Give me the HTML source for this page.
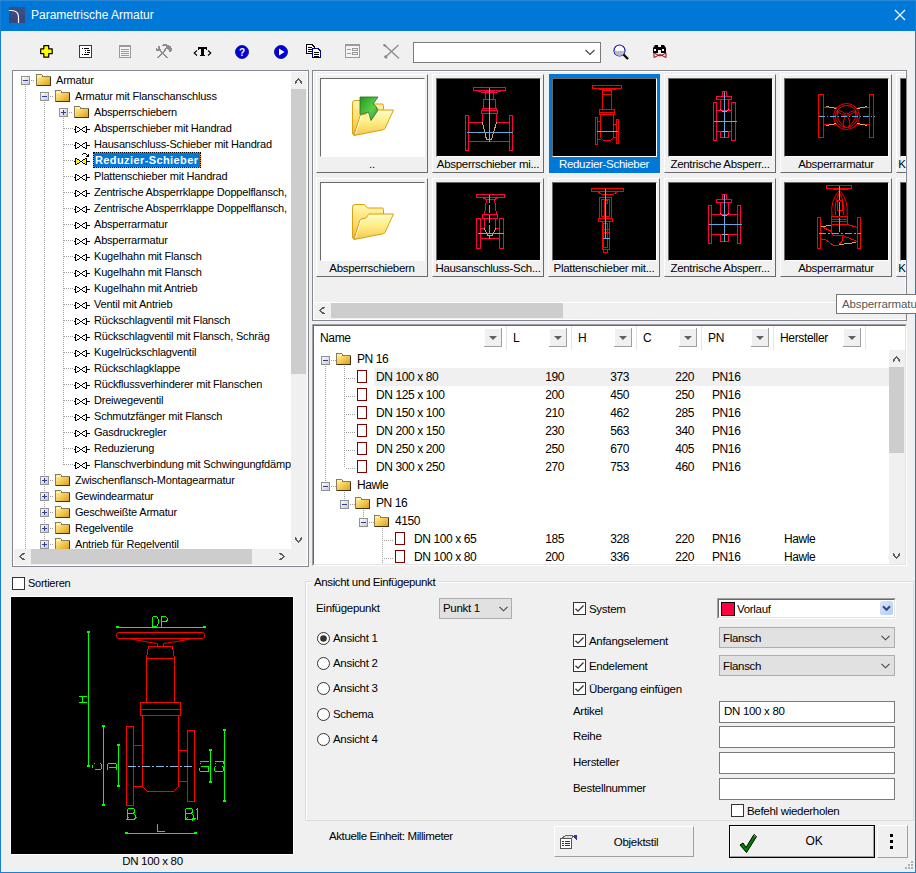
<!DOCTYPE html>
<html><head><meta charset="utf-8"><style>
html,body{margin:0;padding:0;}
body{width:916px;height:873px;position:relative;overflow:hidden;background:#F0F0F0;font-family:"Liberation Sans",sans-serif;}
.t{position:absolute;white-space:nowrap;}
svg{shape-rendering:crispEdges;}
</style></head><body>
<div style="position:absolute;left:0px;top:0px;width:916px;height:873px;box-sizing:border-box;border:1px solid #1A80D6;"></div>
<div style="position:absolute;left:1px;top:1px;width:914px;height:30px;background:#0078D7;"></div>
<div style="position:absolute;left:0px;top:0px;width:916px;height:1px;background:#2A88D8;"></div>
<svg style="position:absolute;left:9px;top:7px;" width="16" height="16" viewBox="0 0 16 16"><rect x="0" y="0" width="16" height="16" fill="#36497A"/><rect x="0" y="0" width="16" height="8" fill="#3E5287" opacity="0.6"/><path d="M0 3.5 H3 Q9.5 4 9.5 10 V16" stroke="#fff" stroke-width="1.2" fill="none" style="shape-rendering:geometricPrecision"/></svg>
<div class="t" style="left:31px;top:7px;height:16px;line-height:16px;font-size:12px;color:#fff;">Parametrische Armatur</div>
<svg style="position:absolute;left:894px;top:9px;" width="12" height="12" viewBox="0 0 12 12"><path d="M1 1 L11 11 M11 1 L1 11" stroke="#fff" stroke-width="1.2" style="shape-rendering:geometricPrecision"/></svg>
<svg style="position:absolute;left:40px;top:45px;" width="13" height="13" viewBox="0 0 13 13"><path d="M3.8 0.7 H8.7 V3.8 H12.2 V8.7 H8.7 V12.2 H3.8 V8.7 H0.7 V3.8 H3.8 Z" fill="#FFFF00" stroke="#000" stroke-width="1.2" stroke-linejoin="round" style="shape-rendering:geometricPrecision"/></svg>
<svg style="position:absolute;left:79px;top:45px;" width="14" height="14" viewBox="0 0 14 14"><rect x="0.5" y="0.5" width="12" height="12" fill="#fff" stroke="#3C3C3C"/><rect x="3" y="3" width="1" height="1" fill="#000"/><rect x="5" y="3" width="5" height="1" fill="#000"/><rect x="6" y="5" width="1" height="1" fill="#000"/><rect x="8" y="5" width="3" height="1" fill="#000"/><rect x="6" y="7" width="1" height="1" fill="#000"/><rect x="8" y="7" width="3" height="1" fill="#000"/><rect x="3" y="9" width="1" height="1" fill="#000"/><rect x="5" y="9" width="5" height="1" fill="#000"/></svg>
<svg style="position:absolute;left:119px;top:45px;" width="13" height="14" viewBox="0 0 13 14"><rect x="0.5" y="0.5" width="11" height="12" fill="#F4F4F4" stroke="#9A9A9A"/><rect x="0" y="0" width="12" height="2" fill="#9A9A9A"/><rect x="2" y="4" width="8" height="1" fill="#9A9A9A"/><rect x="2" y="6" width="8" height="1" fill="#9A9A9A"/><rect x="2" y="8" width="8" height="1" fill="#9A9A9A"/><rect x="2" y="10" width="8" height="1" fill="#9A9A9A"/></svg>
<svg style="position:absolute;left:155px;top:43px;" width="17" height="15" viewBox="0 0 17 15"><rect x="8" y="1" width="4" height="1" fill="#8E8E8E"/><rect x="7" y="2" width="7" height="1" fill="#8E8E8E"/><rect x="3" y="3" width="2" height="1" fill="#8E8E8E"/><rect x="11" y="3" width="5" height="1" fill="#8E8E8E"/><rect x="3" y="4" width="2" height="1" fill="#8E8E8E"/><rect x="11" y="4" width="5" height="1" fill="#8E8E8E"/><rect x="1" y="5" width="1" height="1" fill="#8E8E8E"/><rect x="3" y="5" width="2" height="1" fill="#8E8E8E"/><rect x="10" y="5" width="7" height="1" fill="#8E8E8E"/><rect x="1" y="6" width="5" height="1" fill="#8E8E8E"/><rect x="9" y="6" width="2" height="1" fill="#8E8E8E"/><rect x="13" y="6" width="4" height="1" fill="#8E8E8E"/><rect x="1" y="7" width="5" height="1" fill="#8E8E8E"/><rect x="9" y="7" width="2" height="1" fill="#8E8E8E"/><rect x="14" y="7" width="3" height="1" fill="#8E8E8E"/><rect x="5" y="8" width="2" height="1" fill="#8E8E8E"/><rect x="8" y="8" width="2" height="1" fill="#8E8E8E"/><rect x="14" y="8" width="2" height="1" fill="#8E8E8E"/><rect x="6" y="9" width="3" height="1" fill="#8E8E8E"/><rect x="6" y="10" width="3" height="1" fill="#8E8E8E"/><rect x="5" y="11" width="2" height="1" fill="#8E8E8E"/><rect x="8" y="11" width="2" height="1" fill="#8E8E8E"/><rect x="4" y="12" width="2" height="1" fill="#8E8E8E"/><rect x="9" y="12" width="2" height="1" fill="#8E8E8E"/><rect x="3" y="13" width="2" height="1" fill="#8E8E8E"/><rect x="10" y="13" width="2" height="1" fill="#8E8E8E"/><rect x="2" y="14" width="2" height="1" fill="#8E8E8E"/><rect x="11" y="14" width="2" height="1" fill="#8E8E8E"/></svg>
<svg style="position:absolute;left:192px;top:45px;" width="20" height="13" viewBox="0 0 20 13"><g fill="#000"><rect x="6" y="2" width="9" height="2"/><rect x="6" y="2" width="1" height="3"/><rect x="14" y="2" width="1" height="3"/><rect x="9" y="2" width="3" height="9"/><rect x="8" y="10" width="5" height="1"/></g><path d="M5 5.5 L2.2 8 L5 10.5 M16 5.5 L18.8 8 L16 10.5" stroke="#000" stroke-width="1.1" fill="none" style="shape-rendering:geometricPrecision"/></svg>
<svg style="position:absolute;left:235px;top:45px;" width="14" height="14" viewBox="0 0 14 14"><circle cx="7" cy="7" r="6.5" fill="#0000E0" stroke="#000080" stroke-width="0.8" style="shape-rendering:geometricPrecision"/><text x="7" y="11" text-anchor="middle" font-family="Liberation Sans" font-weight="bold" font-size="10" fill="#fff">?</text></svg>
<svg style="position:absolute;left:274px;top:45px;" width="14" height="14" viewBox="0 0 14 14"><circle cx="7" cy="7" r="6.5" fill="#0000E0" stroke="#000080" stroke-width="0.8" style="shape-rendering:geometricPrecision"/><path d="M5 3.5 L10.5 7 L5 10.5 Z" fill="#fff" style="shape-rendering:geometricPrecision"/></svg>
<svg style="position:absolute;left:306px;top:44px;" width="16" height="14" viewBox="0 0 16 14"><path d="M0.5 0.5 H6 L8 2.5 V9.5 H0.5 Z" fill="#fff" stroke="#000"/><rect x="2" y="3" width="4" height="1" fill="#000"/><rect x="2" y="5" width="4" height="1" fill="#000"/><rect x="2" y="7" width="4" height="1" fill="#000"/><path d="M6.5 4.5 H12 L14.5 7 V13.5 H6.5 Z" fill="#fff" stroke="#000080"/><rect x="8" y="8" width="5" height="1" fill="#000"/><rect x="8" y="10" width="5" height="1" fill="#000"/><rect x="8" y="12" width="5" height="1" fill="#000"/></svg>
<svg style="position:absolute;left:345px;top:44px;" width="15" height="14" viewBox="0 0 15 14"><rect x="0.5" y="0.5" width="14" height="13" fill="#F4F4F4" stroke="#9A9A9A"/><rect x="0" y="0" width="15" height="2" fill="#9A9A9A"/><rect x="2" y="5" width="4" height="1" fill="#9A9A9A"/><rect x="2" y="9" width="4" height="1" fill="#9A9A9A"/><rect x="7.5" y="4.5" width="5" height="2" fill="none" stroke="#9A9A9A"/><rect x="7.5" y="8.5" width="5" height="2" fill="none" stroke="#9A9A9A"/></svg>
<svg style="position:absolute;left:383px;top:44px;" width="17" height="15" viewBox="0 0 17 15"><g style="shape-rendering:geometricPrecision"><path d="M1 0.5 L16 14.5" stroke="#8A8A8A" stroke-width="1.3"/><path d="M15.5 1 L2.5 13" stroke="#8A8A8A" stroke-width="1.3"/><path d="M1.5 12 L4 14" stroke="#8A8A8A" stroke-width="2.5"/><path d="M0.5 0.5 L3 2.5" stroke="#8A8A8A" stroke-width="2"/></g></svg>
<div style="position:absolute;left:413px;top:42px;width:188px;height:21px;box-sizing:border-box;background:#fff;border:1px solid #7A7A7A;"></div>
<svg style="position:absolute;left:585px;top:49px;" width="10" height="7" viewBox="0 0 10 7"><path d="M0.5 1 L5 5.5 L9.5 1" stroke="#444" stroke-width="1.1" fill="none" style="shape-rendering:geometricPrecision"/></svg>
<svg style="position:absolute;left:613px;top:44px;" width="17" height="16" viewBox="0 0 17 16"><g style="shape-rendering:geometricPrecision"><circle cx="6.5" cy="6.5" r="5.5" fill="#fff" stroke="#1010A0" stroke-width="1.2"/><path d="M1.5 7 H11.5 A5 5 0 0 1 1.5 7 Z" fill="#B8B8D0"/><path d="M10.5 10.5 L15 15" stroke="#000" stroke-width="2.2"/></g></svg>
<svg style="position:absolute;left:652px;top:44px;" width="17" height="15" viewBox="0 0 17 15"><g style="shape-rendering:geometricPrecision"><path d="M2 13.5 V9 L8 12 L14 9 V13.5 L8 10.5 Z" fill="none" stroke="#A00000" stroke-width="1"/><path d="M1 9 V4 L3 1 H6 V9 Z" fill="#000"/><path d="M9 9 V1 H12 L14 4 V9 Z" fill="#000"/><rect x="6" y="3" width="3" height="3" fill="#000"/><rect x="2" y="5" width="2" height="2" fill="#fff"/><rect x="10" y="5" width="2" height="2" fill="#fff"/></g></svg>
<svg width="0" height="0" style="position:absolute"><defs><linearGradient id="fg" x1="0" y1="0" x2="1" y2="1"><stop offset="0" stop-color="#FFF6B0"/><stop offset="0.5" stop-color="#F5CC55"/><stop offset="1" stop-color="#DC9A18"/></linearGradient></defs></svg>
<div style="position:absolute;left:12px;top:70px;width:297px;height:497px;box-sizing:border-box;border:1px solid #828790;background:#fff;"></div>
<div style="position:absolute;left:14px;top:72px;width:277px;height:477px;overflow:hidden;">
<svg style="position:absolute;left:0;top:0" width="277" height="477"><g fill="#A0A0A0"><rect x="11" y="14" width="1" height="1"/><rect x="11" y="16" width="1" height="1"/><rect x="11" y="18" width="1" height="1"/><rect x="11" y="20" width="1" height="1"/><rect x="11" y="22" width="1" height="1"/><rect x="11" y="24" width="1" height="1"/><rect x="11" y="26" width="1" height="1"/><rect x="11" y="28" width="1" height="1"/><rect x="11" y="30" width="1" height="1"/><rect x="11" y="32" width="1" height="1"/><rect x="11" y="34" width="1" height="1"/><rect x="11" y="36" width="1" height="1"/><rect x="11" y="38" width="1" height="1"/><rect x="11" y="40" width="1" height="1"/><rect x="11" y="42" width="1" height="1"/><rect x="11" y="44" width="1" height="1"/><rect x="11" y="46" width="1" height="1"/><rect x="11" y="48" width="1" height="1"/><rect x="11" y="50" width="1" height="1"/><rect x="11" y="52" width="1" height="1"/><rect x="11" y="54" width="1" height="1"/><rect x="11" y="56" width="1" height="1"/><rect x="11" y="58" width="1" height="1"/><rect x="11" y="60" width="1" height="1"/><rect x="11" y="62" width="1" height="1"/><rect x="11" y="64" width="1" height="1"/><rect x="11" y="66" width="1" height="1"/><rect x="11" y="68" width="1" height="1"/><rect x="11" y="70" width="1" height="1"/><rect x="11" y="72" width="1" height="1"/><rect x="11" y="74" width="1" height="1"/><rect x="11" y="76" width="1" height="1"/><rect x="11" y="78" width="1" height="1"/><rect x="11" y="80" width="1" height="1"/><rect x="11" y="82" width="1" height="1"/><rect x="11" y="84" width="1" height="1"/><rect x="11" y="86" width="1" height="1"/><rect x="11" y="88" width="1" height="1"/><rect x="11" y="90" width="1" height="1"/><rect x="11" y="92" width="1" height="1"/><rect x="11" y="94" width="1" height="1"/><rect x="11" y="96" width="1" height="1"/><rect x="11" y="98" width="1" height="1"/><rect x="11" y="100" width="1" height="1"/><rect x="11" y="102" width="1" height="1"/><rect x="11" y="104" width="1" height="1"/><rect x="11" y="106" width="1" height="1"/><rect x="11" y="108" width="1" height="1"/><rect x="11" y="110" width="1" height="1"/><rect x="11" y="112" width="1" height="1"/><rect x="11" y="114" width="1" height="1"/><rect x="11" y="116" width="1" height="1"/><rect x="11" y="118" width="1" height="1"/><rect x="11" y="120" width="1" height="1"/><rect x="11" y="122" width="1" height="1"/><rect x="11" y="124" width="1" height="1"/><rect x="11" y="126" width="1" height="1"/><rect x="11" y="128" width="1" height="1"/><rect x="11" y="130" width="1" height="1"/><rect x="11" y="132" width="1" height="1"/><rect x="11" y="134" width="1" height="1"/><rect x="11" y="136" width="1" height="1"/><rect x="11" y="138" width="1" height="1"/><rect x="11" y="140" width="1" height="1"/><rect x="11" y="142" width="1" height="1"/><rect x="11" y="144" width="1" height="1"/><rect x="11" y="146" width="1" height="1"/><rect x="11" y="148" width="1" height="1"/><rect x="11" y="150" width="1" height="1"/><rect x="11" y="152" width="1" height="1"/><rect x="11" y="154" width="1" height="1"/><rect x="11" y="156" width="1" height="1"/><rect x="11" y="158" width="1" height="1"/><rect x="11" y="160" width="1" height="1"/><rect x="11" y="162" width="1" height="1"/><rect x="11" y="164" width="1" height="1"/><rect x="11" y="166" width="1" height="1"/><rect x="11" y="168" width="1" height="1"/><rect x="11" y="170" width="1" height="1"/><rect x="11" y="172" width="1" height="1"/><rect x="11" y="174" width="1" height="1"/><rect x="11" y="176" width="1" height="1"/><rect x="11" y="178" width="1" height="1"/><rect x="11" y="180" width="1" height="1"/><rect x="11" y="182" width="1" height="1"/><rect x="11" y="184" width="1" height="1"/><rect x="11" y="186" width="1" height="1"/><rect x="11" y="188" width="1" height="1"/><rect x="11" y="190" width="1" height="1"/><rect x="11" y="192" width="1" height="1"/><rect x="11" y="194" width="1" height="1"/><rect x="11" y="196" width="1" height="1"/><rect x="11" y="198" width="1" height="1"/><rect x="11" y="200" width="1" height="1"/><rect x="11" y="202" width="1" height="1"/><rect x="11" y="204" width="1" height="1"/><rect x="11" y="206" width="1" height="1"/><rect x="11" y="208" width="1" height="1"/><rect x="11" y="210" width="1" height="1"/><rect x="11" y="212" width="1" height="1"/><rect x="11" y="214" width="1" height="1"/><rect x="11" y="216" width="1" height="1"/><rect x="11" y="218" width="1" height="1"/><rect x="11" y="220" width="1" height="1"/><rect x="11" y="222" width="1" height="1"/><rect x="11" y="224" width="1" height="1"/><rect x="11" y="226" width="1" height="1"/><rect x="11" y="228" width="1" height="1"/><rect x="11" y="230" width="1" height="1"/><rect x="11" y="232" width="1" height="1"/><rect x="11" y="234" width="1" height="1"/><rect x="11" y="236" width="1" height="1"/><rect x="11" y="238" width="1" height="1"/><rect x="11" y="240" width="1" height="1"/><rect x="11" y="242" width="1" height="1"/><rect x="11" y="244" width="1" height="1"/><rect x="11" y="246" width="1" height="1"/><rect x="11" y="248" width="1" height="1"/><rect x="11" y="250" width="1" height="1"/><rect x="11" y="252" width="1" height="1"/><rect x="11" y="254" width="1" height="1"/><rect x="11" y="256" width="1" height="1"/><rect x="11" y="258" width="1" height="1"/><rect x="11" y="260" width="1" height="1"/><rect x="11" y="262" width="1" height="1"/><rect x="11" y="264" width="1" height="1"/><rect x="11" y="266" width="1" height="1"/><rect x="11" y="268" width="1" height="1"/><rect x="11" y="270" width="1" height="1"/><rect x="11" y="272" width="1" height="1"/><rect x="11" y="274" width="1" height="1"/><rect x="11" y="276" width="1" height="1"/><rect x="11" y="278" width="1" height="1"/><rect x="11" y="280" width="1" height="1"/><rect x="11" y="282" width="1" height="1"/><rect x="11" y="284" width="1" height="1"/><rect x="11" y="286" width="1" height="1"/><rect x="11" y="288" width="1" height="1"/><rect x="11" y="290" width="1" height="1"/><rect x="11" y="292" width="1" height="1"/><rect x="11" y="294" width="1" height="1"/><rect x="11" y="296" width="1" height="1"/><rect x="11" y="298" width="1" height="1"/><rect x="11" y="300" width="1" height="1"/><rect x="11" y="302" width="1" height="1"/><rect x="11" y="304" width="1" height="1"/><rect x="11" y="306" width="1" height="1"/><rect x="11" y="308" width="1" height="1"/><rect x="11" y="310" width="1" height="1"/><rect x="11" y="312" width="1" height="1"/><rect x="11" y="314" width="1" height="1"/><rect x="11" y="316" width="1" height="1"/><rect x="11" y="318" width="1" height="1"/><rect x="11" y="320" width="1" height="1"/><rect x="11" y="322" width="1" height="1"/><rect x="11" y="324" width="1" height="1"/><rect x="11" y="326" width="1" height="1"/><rect x="11" y="328" width="1" height="1"/><rect x="11" y="330" width="1" height="1"/><rect x="11" y="332" width="1" height="1"/><rect x="11" y="334" width="1" height="1"/><rect x="11" y="336" width="1" height="1"/><rect x="11" y="338" width="1" height="1"/><rect x="11" y="340" width="1" height="1"/><rect x="11" y="342" width="1" height="1"/><rect x="11" y="344" width="1" height="1"/><rect x="11" y="346" width="1" height="1"/><rect x="11" y="348" width="1" height="1"/><rect x="11" y="350" width="1" height="1"/><rect x="11" y="352" width="1" height="1"/><rect x="11" y="354" width="1" height="1"/><rect x="11" y="356" width="1" height="1"/><rect x="11" y="358" width="1" height="1"/><rect x="11" y="360" width="1" height="1"/><rect x="11" y="362" width="1" height="1"/><rect x="11" y="364" width="1" height="1"/><rect x="11" y="366" width="1" height="1"/><rect x="11" y="368" width="1" height="1"/><rect x="11" y="370" width="1" height="1"/><rect x="11" y="372" width="1" height="1"/><rect x="11" y="374" width="1" height="1"/><rect x="11" y="376" width="1" height="1"/><rect x="11" y="378" width="1" height="1"/><rect x="11" y="380" width="1" height="1"/><rect x="11" y="382" width="1" height="1"/><rect x="11" y="384" width="1" height="1"/><rect x="11" y="386" width="1" height="1"/><rect x="11" y="388" width="1" height="1"/><rect x="11" y="390" width="1" height="1"/><rect x="11" y="392" width="1" height="1"/><rect x="11" y="394" width="1" height="1"/><rect x="11" y="396" width="1" height="1"/><rect x="11" y="398" width="1" height="1"/><rect x="11" y="400" width="1" height="1"/><rect x="11" y="402" width="1" height="1"/><rect x="11" y="404" width="1" height="1"/><rect x="11" y="406" width="1" height="1"/><rect x="11" y="408" width="1" height="1"/><rect x="11" y="410" width="1" height="1"/><rect x="11" y="412" width="1" height="1"/><rect x="11" y="414" width="1" height="1"/><rect x="11" y="416" width="1" height="1"/><rect x="11" y="418" width="1" height="1"/><rect x="11" y="420" width="1" height="1"/><rect x="11" y="422" width="1" height="1"/><rect x="11" y="424" width="1" height="1"/><rect x="11" y="426" width="1" height="1"/><rect x="11" y="428" width="1" height="1"/><rect x="11" y="430" width="1" height="1"/><rect x="11" y="432" width="1" height="1"/><rect x="11" y="434" width="1" height="1"/><rect x="11" y="436" width="1" height="1"/><rect x="11" y="438" width="1" height="1"/><rect x="11" y="440" width="1" height="1"/><rect x="11" y="442" width="1" height="1"/><rect x="11" y="444" width="1" height="1"/><rect x="11" y="446" width="1" height="1"/><rect x="11" y="448" width="1" height="1"/><rect x="11" y="450" width="1" height="1"/><rect x="11" y="452" width="1" height="1"/><rect x="11" y="454" width="1" height="1"/><rect x="11" y="456" width="1" height="1"/><rect x="11" y="458" width="1" height="1"/><rect x="11" y="460" width="1" height="1"/><rect x="11" y="462" width="1" height="1"/><rect x="11" y="464" width="1" height="1"/><rect x="11" y="466" width="1" height="1"/><rect x="11" y="468" width="1" height="1"/><rect x="11" y="470" width="1" height="1"/><rect x="11" y="472" width="1" height="1"/><rect x="11" y="474" width="1" height="1"/><rect x="11" y="476" width="1" height="1"/><rect x="30" y="30" width="1" height="1"/><rect x="30" y="32" width="1" height="1"/><rect x="30" y="34" width="1" height="1"/><rect x="30" y="36" width="1" height="1"/><rect x="30" y="38" width="1" height="1"/><rect x="30" y="40" width="1" height="1"/><rect x="30" y="42" width="1" height="1"/><rect x="30" y="44" width="1" height="1"/><rect x="30" y="46" width="1" height="1"/><rect x="30" y="48" width="1" height="1"/><rect x="30" y="50" width="1" height="1"/><rect x="30" y="52" width="1" height="1"/><rect x="30" y="54" width="1" height="1"/><rect x="30" y="56" width="1" height="1"/><rect x="30" y="58" width="1" height="1"/><rect x="30" y="60" width="1" height="1"/><rect x="30" y="62" width="1" height="1"/><rect x="30" y="64" width="1" height="1"/><rect x="30" y="66" width="1" height="1"/><rect x="30" y="68" width="1" height="1"/><rect x="30" y="70" width="1" height="1"/><rect x="30" y="72" width="1" height="1"/><rect x="30" y="74" width="1" height="1"/><rect x="30" y="76" width="1" height="1"/><rect x="30" y="78" width="1" height="1"/><rect x="30" y="80" width="1" height="1"/><rect x="30" y="82" width="1" height="1"/><rect x="30" y="84" width="1" height="1"/><rect x="30" y="86" width="1" height="1"/><rect x="30" y="88" width="1" height="1"/><rect x="30" y="90" width="1" height="1"/><rect x="30" y="92" width="1" height="1"/><rect x="30" y="94" width="1" height="1"/><rect x="30" y="96" width="1" height="1"/><rect x="30" y="98" width="1" height="1"/><rect x="30" y="100" width="1" height="1"/><rect x="30" y="102" width="1" height="1"/><rect x="30" y="104" width="1" height="1"/><rect x="30" y="106" width="1" height="1"/><rect x="30" y="108" width="1" height="1"/><rect x="30" y="110" width="1" height="1"/><rect x="30" y="112" width="1" height="1"/><rect x="30" y="114" width="1" height="1"/><rect x="30" y="116" width="1" height="1"/><rect x="30" y="118" width="1" height="1"/><rect x="30" y="120" width="1" height="1"/><rect x="30" y="122" width="1" height="1"/><rect x="30" y="124" width="1" height="1"/><rect x="30" y="126" width="1" height="1"/><rect x="30" y="128" width="1" height="1"/><rect x="30" y="130" width="1" height="1"/><rect x="30" y="132" width="1" height="1"/><rect x="30" y="134" width="1" height="1"/><rect x="30" y="136" width="1" height="1"/><rect x="30" y="138" width="1" height="1"/><rect x="30" y="140" width="1" height="1"/><rect x="30" y="142" width="1" height="1"/><rect x="30" y="144" width="1" height="1"/><rect x="30" y="146" width="1" height="1"/><rect x="30" y="148" width="1" height="1"/><rect x="30" y="150" width="1" height="1"/><rect x="30" y="152" width="1" height="1"/><rect x="30" y="154" width="1" height="1"/><rect x="30" y="156" width="1" height="1"/><rect x="30" y="158" width="1" height="1"/><rect x="30" y="160" width="1" height="1"/><rect x="30" y="162" width="1" height="1"/><rect x="30" y="164" width="1" height="1"/><rect x="30" y="166" width="1" height="1"/><rect x="30" y="168" width="1" height="1"/><rect x="30" y="170" width="1" height="1"/><rect x="30" y="172" width="1" height="1"/><rect x="30" y="174" width="1" height="1"/><rect x="30" y="176" width="1" height="1"/><rect x="30" y="178" width="1" height="1"/><rect x="30" y="180" width="1" height="1"/><rect x="30" y="182" width="1" height="1"/><rect x="30" y="184" width="1" height="1"/><rect x="30" y="186" width="1" height="1"/><rect x="30" y="188" width="1" height="1"/><rect x="30" y="190" width="1" height="1"/><rect x="30" y="192" width="1" height="1"/><rect x="30" y="194" width="1" height="1"/><rect x="30" y="196" width="1" height="1"/><rect x="30" y="198" width="1" height="1"/><rect x="30" y="200" width="1" height="1"/><rect x="30" y="202" width="1" height="1"/><rect x="30" y="204" width="1" height="1"/><rect x="30" y="206" width="1" height="1"/><rect x="30" y="208" width="1" height="1"/><rect x="30" y="210" width="1" height="1"/><rect x="30" y="212" width="1" height="1"/><rect x="30" y="214" width="1" height="1"/><rect x="30" y="216" width="1" height="1"/><rect x="30" y="218" width="1" height="1"/><rect x="30" y="220" width="1" height="1"/><rect x="30" y="222" width="1" height="1"/><rect x="30" y="224" width="1" height="1"/><rect x="30" y="226" width="1" height="1"/><rect x="30" y="228" width="1" height="1"/><rect x="30" y="230" width="1" height="1"/><rect x="30" y="232" width="1" height="1"/><rect x="30" y="234" width="1" height="1"/><rect x="30" y="236" width="1" height="1"/><rect x="30" y="238" width="1" height="1"/><rect x="30" y="240" width="1" height="1"/><rect x="30" y="242" width="1" height="1"/><rect x="30" y="244" width="1" height="1"/><rect x="30" y="246" width="1" height="1"/><rect x="30" y="248" width="1" height="1"/><rect x="30" y="250" width="1" height="1"/><rect x="30" y="252" width="1" height="1"/><rect x="30" y="254" width="1" height="1"/><rect x="30" y="256" width="1" height="1"/><rect x="30" y="258" width="1" height="1"/><rect x="30" y="260" width="1" height="1"/><rect x="30" y="262" width="1" height="1"/><rect x="30" y="264" width="1" height="1"/><rect x="30" y="266" width="1" height="1"/><rect x="30" y="268" width="1" height="1"/><rect x="30" y="270" width="1" height="1"/><rect x="30" y="272" width="1" height="1"/><rect x="30" y="274" width="1" height="1"/><rect x="30" y="276" width="1" height="1"/><rect x="30" y="278" width="1" height="1"/><rect x="30" y="280" width="1" height="1"/><rect x="30" y="282" width="1" height="1"/><rect x="30" y="284" width="1" height="1"/><rect x="30" y="286" width="1" height="1"/><rect x="30" y="288" width="1" height="1"/><rect x="30" y="290" width="1" height="1"/><rect x="30" y="292" width="1" height="1"/><rect x="30" y="294" width="1" height="1"/><rect x="30" y="296" width="1" height="1"/><rect x="30" y="298" width="1" height="1"/><rect x="30" y="300" width="1" height="1"/><rect x="30" y="302" width="1" height="1"/><rect x="30" y="304" width="1" height="1"/><rect x="30" y="306" width="1" height="1"/><rect x="30" y="308" width="1" height="1"/><rect x="30" y="310" width="1" height="1"/><rect x="30" y="312" width="1" height="1"/><rect x="30" y="314" width="1" height="1"/><rect x="30" y="316" width="1" height="1"/><rect x="30" y="318" width="1" height="1"/><rect x="30" y="320" width="1" height="1"/><rect x="30" y="322" width="1" height="1"/><rect x="30" y="324" width="1" height="1"/><rect x="30" y="326" width="1" height="1"/><rect x="30" y="328" width="1" height="1"/><rect x="30" y="330" width="1" height="1"/><rect x="30" y="332" width="1" height="1"/><rect x="30" y="334" width="1" height="1"/><rect x="30" y="336" width="1" height="1"/><rect x="30" y="338" width="1" height="1"/><rect x="30" y="340" width="1" height="1"/><rect x="30" y="342" width="1" height="1"/><rect x="30" y="344" width="1" height="1"/><rect x="30" y="346" width="1" height="1"/><rect x="30" y="348" width="1" height="1"/><rect x="30" y="350" width="1" height="1"/><rect x="30" y="352" width="1" height="1"/><rect x="30" y="354" width="1" height="1"/><rect x="30" y="356" width="1" height="1"/><rect x="30" y="358" width="1" height="1"/><rect x="30" y="360" width="1" height="1"/><rect x="30" y="362" width="1" height="1"/><rect x="30" y="364" width="1" height="1"/><rect x="30" y="366" width="1" height="1"/><rect x="30" y="368" width="1" height="1"/><rect x="30" y="370" width="1" height="1"/><rect x="30" y="372" width="1" height="1"/><rect x="30" y="374" width="1" height="1"/><rect x="30" y="376" width="1" height="1"/><rect x="30" y="378" width="1" height="1"/><rect x="30" y="380" width="1" height="1"/><rect x="30" y="382" width="1" height="1"/><rect x="30" y="384" width="1" height="1"/><rect x="30" y="386" width="1" height="1"/><rect x="30" y="388" width="1" height="1"/><rect x="30" y="390" width="1" height="1"/><rect x="30" y="392" width="1" height="1"/><rect x="30" y="394" width="1" height="1"/><rect x="30" y="396" width="1" height="1"/><rect x="30" y="398" width="1" height="1"/><rect x="30" y="400" width="1" height="1"/><rect x="30" y="402" width="1" height="1"/><rect x="30" y="404" width="1" height="1"/><rect x="30" y="406" width="1" height="1"/><rect x="30" y="408" width="1" height="1"/><rect x="30" y="410" width="1" height="1"/><rect x="30" y="412" width="1" height="1"/><rect x="30" y="414" width="1" height="1"/><rect x="30" y="416" width="1" height="1"/><rect x="30" y="418" width="1" height="1"/><rect x="30" y="420" width="1" height="1"/><rect x="30" y="422" width="1" height="1"/><rect x="30" y="424" width="1" height="1"/><rect x="30" y="426" width="1" height="1"/><rect x="30" y="428" width="1" height="1"/><rect x="30" y="430" width="1" height="1"/><rect x="30" y="432" width="1" height="1"/><rect x="30" y="434" width="1" height="1"/><rect x="30" y="436" width="1" height="1"/><rect x="30" y="438" width="1" height="1"/><rect x="30" y="440" width="1" height="1"/><rect x="30" y="442" width="1" height="1"/><rect x="30" y="444" width="1" height="1"/><rect x="30" y="446" width="1" height="1"/><rect x="30" y="448" width="1" height="1"/><rect x="30" y="450" width="1" height="1"/><rect x="30" y="452" width="1" height="1"/><rect x="30" y="454" width="1" height="1"/><rect x="30" y="456" width="1" height="1"/><rect x="30" y="458" width="1" height="1"/><rect x="30" y="460" width="1" height="1"/><rect x="30" y="462" width="1" height="1"/><rect x="30" y="464" width="1" height="1"/><rect x="30" y="466" width="1" height="1"/><rect x="30" y="468" width="1" height="1"/><rect x="30" y="470" width="1" height="1"/><rect x="30" y="472" width="1" height="1"/><rect x="30" y="474" width="1" height="1"/><rect x="30" y="476" width="1" height="1"/><rect x="49" y="46" width="1" height="1"/><rect x="49" y="48" width="1" height="1"/><rect x="49" y="50" width="1" height="1"/><rect x="49" y="52" width="1" height="1"/><rect x="49" y="54" width="1" height="1"/><rect x="49" y="56" width="1" height="1"/><rect x="49" y="58" width="1" height="1"/><rect x="49" y="60" width="1" height="1"/><rect x="49" y="62" width="1" height="1"/><rect x="49" y="64" width="1" height="1"/><rect x="49" y="66" width="1" height="1"/><rect x="49" y="68" width="1" height="1"/><rect x="49" y="70" width="1" height="1"/><rect x="49" y="72" width="1" height="1"/><rect x="49" y="74" width="1" height="1"/><rect x="49" y="76" width="1" height="1"/><rect x="49" y="78" width="1" height="1"/><rect x="49" y="80" width="1" height="1"/><rect x="49" y="82" width="1" height="1"/><rect x="49" y="84" width="1" height="1"/><rect x="49" y="86" width="1" height="1"/><rect x="49" y="88" width="1" height="1"/><rect x="49" y="90" width="1" height="1"/><rect x="49" y="92" width="1" height="1"/><rect x="49" y="94" width="1" height="1"/><rect x="49" y="96" width="1" height="1"/><rect x="49" y="98" width="1" height="1"/><rect x="49" y="100" width="1" height="1"/><rect x="49" y="102" width="1" height="1"/><rect x="49" y="104" width="1" height="1"/><rect x="49" y="106" width="1" height="1"/><rect x="49" y="108" width="1" height="1"/><rect x="49" y="110" width="1" height="1"/><rect x="49" y="112" width="1" height="1"/><rect x="49" y="114" width="1" height="1"/><rect x="49" y="116" width="1" height="1"/><rect x="49" y="118" width="1" height="1"/><rect x="49" y="120" width="1" height="1"/><rect x="49" y="122" width="1" height="1"/><rect x="49" y="124" width="1" height="1"/><rect x="49" y="126" width="1" height="1"/><rect x="49" y="128" width="1" height="1"/><rect x="49" y="130" width="1" height="1"/><rect x="49" y="132" width="1" height="1"/><rect x="49" y="134" width="1" height="1"/><rect x="49" y="136" width="1" height="1"/><rect x="49" y="138" width="1" height="1"/><rect x="49" y="140" width="1" height="1"/><rect x="49" y="142" width="1" height="1"/><rect x="49" y="144" width="1" height="1"/><rect x="49" y="146" width="1" height="1"/><rect x="49" y="148" width="1" height="1"/><rect x="49" y="150" width="1" height="1"/><rect x="49" y="152" width="1" height="1"/><rect x="49" y="154" width="1" height="1"/><rect x="49" y="156" width="1" height="1"/><rect x="49" y="158" width="1" height="1"/><rect x="49" y="160" width="1" height="1"/><rect x="49" y="162" width="1" height="1"/><rect x="49" y="164" width="1" height="1"/><rect x="49" y="166" width="1" height="1"/><rect x="49" y="168" width="1" height="1"/><rect x="49" y="170" width="1" height="1"/><rect x="49" y="172" width="1" height="1"/><rect x="49" y="174" width="1" height="1"/><rect x="49" y="176" width="1" height="1"/><rect x="49" y="178" width="1" height="1"/><rect x="49" y="180" width="1" height="1"/><rect x="49" y="182" width="1" height="1"/><rect x="49" y="184" width="1" height="1"/><rect x="49" y="186" width="1" height="1"/><rect x="49" y="188" width="1" height="1"/><rect x="49" y="190" width="1" height="1"/><rect x="49" y="192" width="1" height="1"/><rect x="49" y="194" width="1" height="1"/><rect x="49" y="196" width="1" height="1"/><rect x="49" y="198" width="1" height="1"/><rect x="49" y="200" width="1" height="1"/><rect x="49" y="202" width="1" height="1"/><rect x="49" y="204" width="1" height="1"/><rect x="49" y="206" width="1" height="1"/><rect x="49" y="208" width="1" height="1"/><rect x="49" y="210" width="1" height="1"/><rect x="49" y="212" width="1" height="1"/><rect x="49" y="214" width="1" height="1"/><rect x="49" y="216" width="1" height="1"/><rect x="49" y="218" width="1" height="1"/><rect x="49" y="220" width="1" height="1"/><rect x="49" y="222" width="1" height="1"/><rect x="49" y="224" width="1" height="1"/><rect x="49" y="226" width="1" height="1"/><rect x="49" y="228" width="1" height="1"/><rect x="49" y="230" width="1" height="1"/><rect x="49" y="232" width="1" height="1"/><rect x="49" y="234" width="1" height="1"/><rect x="49" y="236" width="1" height="1"/><rect x="49" y="238" width="1" height="1"/><rect x="49" y="240" width="1" height="1"/><rect x="49" y="242" width="1" height="1"/><rect x="49" y="244" width="1" height="1"/><rect x="49" y="246" width="1" height="1"/><rect x="49" y="248" width="1" height="1"/><rect x="49" y="250" width="1" height="1"/><rect x="49" y="252" width="1" height="1"/><rect x="49" y="254" width="1" height="1"/><rect x="49" y="256" width="1" height="1"/><rect x="49" y="258" width="1" height="1"/><rect x="49" y="260" width="1" height="1"/><rect x="49" y="262" width="1" height="1"/><rect x="49" y="264" width="1" height="1"/><rect x="49" y="266" width="1" height="1"/><rect x="49" y="268" width="1" height="1"/><rect x="49" y="270" width="1" height="1"/><rect x="49" y="272" width="1" height="1"/><rect x="49" y="274" width="1" height="1"/><rect x="49" y="276" width="1" height="1"/><rect x="49" y="278" width="1" height="1"/><rect x="49" y="280" width="1" height="1"/><rect x="49" y="282" width="1" height="1"/><rect x="49" y="284" width="1" height="1"/><rect x="49" y="286" width="1" height="1"/><rect x="49" y="288" width="1" height="1"/><rect x="49" y="290" width="1" height="1"/><rect x="49" y="292" width="1" height="1"/><rect x="49" y="294" width="1" height="1"/><rect x="49" y="296" width="1" height="1"/><rect x="49" y="298" width="1" height="1"/><rect x="49" y="300" width="1" height="1"/><rect x="49" y="302" width="1" height="1"/><rect x="49" y="304" width="1" height="1"/><rect x="49" y="306" width="1" height="1"/><rect x="49" y="308" width="1" height="1"/><rect x="49" y="310" width="1" height="1"/><rect x="49" y="312" width="1" height="1"/><rect x="49" y="314" width="1" height="1"/><rect x="49" y="316" width="1" height="1"/><rect x="49" y="318" width="1" height="1"/><rect x="49" y="320" width="1" height="1"/><rect x="49" y="322" width="1" height="1"/><rect x="49" y="324" width="1" height="1"/><rect x="49" y="326" width="1" height="1"/><rect x="49" y="328" width="1" height="1"/><rect x="49" y="330" width="1" height="1"/><rect x="49" y="332" width="1" height="1"/><rect x="49" y="334" width="1" height="1"/><rect x="49" y="336" width="1" height="1"/><rect x="49" y="338" width="1" height="1"/><rect x="49" y="340" width="1" height="1"/><rect x="49" y="342" width="1" height="1"/><rect x="49" y="344" width="1" height="1"/><rect x="49" y="346" width="1" height="1"/><rect x="49" y="348" width="1" height="1"/><rect x="49" y="350" width="1" height="1"/><rect x="49" y="352" width="1" height="1"/><rect x="49" y="354" width="1" height="1"/><rect x="49" y="356" width="1" height="1"/><rect x="49" y="358" width="1" height="1"/><rect x="49" y="360" width="1" height="1"/><rect x="49" y="362" width="1" height="1"/><rect x="49" y="364" width="1" height="1"/><rect x="49" y="366" width="1" height="1"/><rect x="49" y="368" width="1" height="1"/><rect x="49" y="370" width="1" height="1"/><rect x="49" y="372" width="1" height="1"/><rect x="49" y="374" width="1" height="1"/><rect x="49" y="376" width="1" height="1"/><rect x="49" y="378" width="1" height="1"/><rect x="49" y="380" width="1" height="1"/><rect x="49" y="382" width="1" height="1"/><rect x="49" y="384" width="1" height="1"/><rect x="49" y="386" width="1" height="1"/><rect x="49" y="388" width="1" height="1"/><rect x="49" y="390" width="1" height="1"/><rect x="49" y="392" width="1" height="1"/><rect x="17" y="8" width="1" height="1"/><rect x="19" y="8" width="1" height="1"/><rect x="36" y="24" width="1" height="1"/><rect x="38" y="24" width="1" height="1"/><rect x="55" y="40" width="1" height="1"/><rect x="57" y="40" width="1" height="1"/><rect x="50" y="56" width="1" height="1"/><rect x="52" y="56" width="1" height="1"/><rect x="54" y="56" width="1" height="1"/><rect x="56" y="56" width="1" height="1"/><rect x="58" y="56" width="1" height="1"/><rect x="50" y="72" width="1" height="1"/><rect x="52" y="72" width="1" height="1"/><rect x="54" y="72" width="1" height="1"/><rect x="56" y="72" width="1" height="1"/><rect x="58" y="72" width="1" height="1"/><rect x="50" y="88" width="1" height="1"/><rect x="52" y="88" width="1" height="1"/><rect x="54" y="88" width="1" height="1"/><rect x="56" y="88" width="1" height="1"/><rect x="58" y="88" width="1" height="1"/><rect x="50" y="104" width="1" height="1"/><rect x="52" y="104" width="1" height="1"/><rect x="54" y="104" width="1" height="1"/><rect x="56" y="104" width="1" height="1"/><rect x="58" y="104" width="1" height="1"/><rect x="50" y="120" width="1" height="1"/><rect x="52" y="120" width="1" height="1"/><rect x="54" y="120" width="1" height="1"/><rect x="56" y="120" width="1" height="1"/><rect x="58" y="120" width="1" height="1"/><rect x="50" y="136" width="1" height="1"/><rect x="52" y="136" width="1" height="1"/><rect x="54" y="136" width="1" height="1"/><rect x="56" y="136" width="1" height="1"/><rect x="58" y="136" width="1" height="1"/><rect x="50" y="152" width="1" height="1"/><rect x="52" y="152" width="1" height="1"/><rect x="54" y="152" width="1" height="1"/><rect x="56" y="152" width="1" height="1"/><rect x="58" y="152" width="1" height="1"/><rect x="50" y="168" width="1" height="1"/><rect x="52" y="168" width="1" height="1"/><rect x="54" y="168" width="1" height="1"/><rect x="56" y="168" width="1" height="1"/><rect x="58" y="168" width="1" height="1"/><rect x="50" y="184" width="1" height="1"/><rect x="52" y="184" width="1" height="1"/><rect x="54" y="184" width="1" height="1"/><rect x="56" y="184" width="1" height="1"/><rect x="58" y="184" width="1" height="1"/><rect x="50" y="200" width="1" height="1"/><rect x="52" y="200" width="1" height="1"/><rect x="54" y="200" width="1" height="1"/><rect x="56" y="200" width="1" height="1"/><rect x="58" y="200" width="1" height="1"/><rect x="50" y="216" width="1" height="1"/><rect x="52" y="216" width="1" height="1"/><rect x="54" y="216" width="1" height="1"/><rect x="56" y="216" width="1" height="1"/><rect x="58" y="216" width="1" height="1"/><rect x="50" y="232" width="1" height="1"/><rect x="52" y="232" width="1" height="1"/><rect x="54" y="232" width="1" height="1"/><rect x="56" y="232" width="1" height="1"/><rect x="58" y="232" width="1" height="1"/><rect x="50" y="248" width="1" height="1"/><rect x="52" y="248" width="1" height="1"/><rect x="54" y="248" width="1" height="1"/><rect x="56" y="248" width="1" height="1"/><rect x="58" y="248" width="1" height="1"/><rect x="50" y="264" width="1" height="1"/><rect x="52" y="264" width="1" height="1"/><rect x="54" y="264" width="1" height="1"/><rect x="56" y="264" width="1" height="1"/><rect x="58" y="264" width="1" height="1"/><rect x="50" y="280" width="1" height="1"/><rect x="52" y="280" width="1" height="1"/><rect x="54" y="280" width="1" height="1"/><rect x="56" y="280" width="1" height="1"/><rect x="58" y="280" width="1" height="1"/><rect x="50" y="296" width="1" height="1"/><rect x="52" y="296" width="1" height="1"/><rect x="54" y="296" width="1" height="1"/><rect x="56" y="296" width="1" height="1"/><rect x="58" y="296" width="1" height="1"/><rect x="50" y="312" width="1" height="1"/><rect x="52" y="312" width="1" height="1"/><rect x="54" y="312" width="1" height="1"/><rect x="56" y="312" width="1" height="1"/><rect x="58" y="312" width="1" height="1"/><rect x="50" y="328" width="1" height="1"/><rect x="52" y="328" width="1" height="1"/><rect x="54" y="328" width="1" height="1"/><rect x="56" y="328" width="1" height="1"/><rect x="58" y="328" width="1" height="1"/><rect x="50" y="344" width="1" height="1"/><rect x="52" y="344" width="1" height="1"/><rect x="54" y="344" width="1" height="1"/><rect x="56" y="344" width="1" height="1"/><rect x="58" y="344" width="1" height="1"/><rect x="50" y="360" width="1" height="1"/><rect x="52" y="360" width="1" height="1"/><rect x="54" y="360" width="1" height="1"/><rect x="56" y="360" width="1" height="1"/><rect x="58" y="360" width="1" height="1"/><rect x="50" y="376" width="1" height="1"/><rect x="52" y="376" width="1" height="1"/><rect x="54" y="376" width="1" height="1"/><rect x="56" y="376" width="1" height="1"/><rect x="58" y="376" width="1" height="1"/><rect x="50" y="392" width="1" height="1"/><rect x="52" y="392" width="1" height="1"/><rect x="54" y="392" width="1" height="1"/><rect x="56" y="392" width="1" height="1"/><rect x="58" y="392" width="1" height="1"/><rect x="36" y="408" width="1" height="1"/><rect x="38" y="408" width="1" height="1"/><rect x="36" y="424" width="1" height="1"/><rect x="38" y="424" width="1" height="1"/><rect x="36" y="440" width="1" height="1"/><rect x="38" y="440" width="1" height="1"/><rect x="36" y="456" width="1" height="1"/><rect x="38" y="456" width="1" height="1"/><rect x="36" y="472" width="1" height="1"/><rect x="38" y="472" width="1" height="1"/></g></svg>
<svg style="position:absolute;left:7px;top:4px" width="9" height="9"><defs><linearGradient id="eg0" x1="0" y1="0" x2="1" y2="1"><stop offset="0" stop-color="#fff"/><stop offset="1" stop-color="#C8C8C8"/></linearGradient></defs><rect x="0.5" y="0.5" width="8" height="8" fill="url(#eg0)" stroke="#919191"/><rect x="2" y="4" width="5" height="1" fill="#2A3F9A"/></svg>
<svg style="position:absolute;left:21px;top:0px" width="16" height="16"><path d="M1.5 13.5 V2.5 H6.5 L7.5 4.5 H15.5 V13.5 Z" fill="url(#fg)" stroke="#8A7A55" stroke-width="1"/><rect x="2" y="3" width="4.5" height="1.5" fill="#FFF2A8"/><path d="M1.5 13.5 H15.5 V4.5" fill="none" stroke="#2A1E00" stroke-width="1" opacity="0.75"/></svg>
<div class="t" style="left:42px;top:0px;height:16px;line-height:16px;font-size:11px;color:#000;letter-spacing:-0.2px">Armatur</div>
<svg style="position:absolute;left:26px;top:20px" width="9" height="9"><defs><linearGradient id="eg1" x1="0" y1="0" x2="1" y2="1"><stop offset="0" stop-color="#fff"/><stop offset="1" stop-color="#C8C8C8"/></linearGradient></defs><rect x="0.5" y="0.5" width="8" height="8" fill="url(#eg1)" stroke="#919191"/><rect x="2" y="4" width="5" height="1" fill="#2A3F9A"/></svg>
<svg style="position:absolute;left:40px;top:16px" width="16" height="16"><path d="M1.5 13.5 V2.5 H6.5 L7.5 4.5 H15.5 V13.5 Z" fill="url(#fg)" stroke="#8A7A55" stroke-width="1"/><rect x="2" y="3" width="4.5" height="1.5" fill="#FFF2A8"/><path d="M1.5 13.5 H15.5 V4.5" fill="none" stroke="#2A1E00" stroke-width="1" opacity="0.75"/></svg>
<div class="t" style="left:61px;top:16px;height:16px;line-height:16px;font-size:11px;color:#000;letter-spacing:-0.2px">Armatur mit Flanschanschluss</div>
<svg style="position:absolute;left:45px;top:36px" width="9" height="9"><defs><linearGradient id="eg2" x1="0" y1="0" x2="1" y2="1"><stop offset="0" stop-color="#fff"/><stop offset="1" stop-color="#C8C8C8"/></linearGradient></defs><rect x="0.5" y="0.5" width="8" height="8" fill="url(#eg2)" stroke="#919191"/><rect x="2" y="4" width="5" height="1" fill="#2A3F9A"/><rect x="4" y="2" width="1" height="5" fill="#2A3F9A"/></svg>
<svg style="position:absolute;left:59px;top:32px" width="16" height="16"><path d="M1.5 13.5 V2.5 H6.5 L7.5 4.5 H15.5 V13.5 Z" fill="url(#fg)" stroke="#8A7A55" stroke-width="1"/><rect x="2" y="3" width="4.5" height="1.5" fill="#FFF2A8"/><path d="M1.5 13.5 H15.5 V4.5" fill="none" stroke="#2A1E00" stroke-width="1" opacity="0.75"/></svg>
<div class="t" style="left:80px;top:32px;height:16px;line-height:16px;font-size:11px;color:#000;letter-spacing:-0.2px">Absperrschiebern</div>
<svg style="position:absolute;left:59px;top:54px" width="17" height="13"><rect x="2" y="0" width="2" height="1" fill="#000"/><rect x="12" y="0" width="2" height="1" fill="#000"/><rect x="2" y="1" width="1" height="1" fill="#000"/><rect x="4" y="1" width="2" height="1" fill="#000"/><rect x="10" y="1" width="2" height="1" fill="#000"/><rect x="13" y="1" width="1" height="1" fill="#000"/><rect x="2" y="2" width="1" height="1" fill="#000"/><rect x="6" y="2" width="1" height="1" fill="#000"/><rect x="9" y="2" width="1" height="1" fill="#000"/><rect x="13" y="2" width="1" height="1" fill="#000"/><rect x="1" y="3" width="2" height="1" fill="#000"/><rect x="7" y="3" width="2" height="1" fill="#000"/><rect x="13" y="3" width="4" height="1" fill="#000"/><rect x="2" y="4" width="1" height="1" fill="#000"/><rect x="6" y="4" width="1" height="1" fill="#000"/><rect x="9" y="4" width="1" height="1" fill="#000"/><rect x="13" y="4" width="1" height="1" fill="#000"/><rect x="2" y="5" width="1" height="1" fill="#000"/><rect x="4" y="5" width="2" height="1" fill="#000"/><rect x="10" y="5" width="2" height="1" fill="#000"/><rect x="13" y="5" width="1" height="1" fill="#000"/><rect x="2" y="6" width="2" height="1" fill="#000"/><rect x="12" y="6" width="2" height="1" fill="#000"/></svg>
<div class="t" style="left:80px;top:48px;height:16px;line-height:16px;font-size:11px;color:#000;letter-spacing:-0.2px">Absperrschieber mit Handrad</div>
<svg style="position:absolute;left:59px;top:70px" width="17" height="13"><rect x="2" y="0" width="2" height="1" fill="#000"/><rect x="12" y="0" width="2" height="1" fill="#000"/><rect x="2" y="1" width="1" height="1" fill="#000"/><rect x="4" y="1" width="2" height="1" fill="#000"/><rect x="10" y="1" width="2" height="1" fill="#000"/><rect x="13" y="1" width="1" height="1" fill="#000"/><rect x="2" y="2" width="1" height="1" fill="#000"/><rect x="6" y="2" width="1" height="1" fill="#000"/><rect x="9" y="2" width="1" height="1" fill="#000"/><rect x="13" y="2" width="1" height="1" fill="#000"/><rect x="1" y="3" width="2" height="1" fill="#000"/><rect x="7" y="3" width="2" height="1" fill="#000"/><rect x="13" y="3" width="4" height="1" fill="#000"/><rect x="2" y="4" width="1" height="1" fill="#000"/><rect x="6" y="4" width="1" height="1" fill="#000"/><rect x="9" y="4" width="1" height="1" fill="#000"/><rect x="13" y="4" width="1" height="1" fill="#000"/><rect x="2" y="5" width="1" height="1" fill="#000"/><rect x="4" y="5" width="2" height="1" fill="#000"/><rect x="10" y="5" width="2" height="1" fill="#000"/><rect x="13" y="5" width="1" height="1" fill="#000"/><rect x="2" y="6" width="2" height="1" fill="#000"/><rect x="12" y="6" width="2" height="1" fill="#000"/></svg>
<div class="t" style="left:80px;top:64px;height:16px;line-height:16px;font-size:11px;color:#000;letter-spacing:-0.2px">Hausanschluss-Schieber mit Handrad</div>
<svg style="position:absolute;left:59px;top:80px" width="17" height="13"><rect x="10" y="1" width="3" height="1" fill="#000"/><rect x="9" y="2" width="1" height="1" fill="#000"/><rect x="13" y="2" width="1" height="1" fill="#000"/><rect x="15" y="2" width="1" height="1" fill="#000"/><rect x="14" y="3" width="2" height="1" fill="#000"/><rect x="13" y="4" width="3" height="1" fill="#000"/><rect x="2" y="6" width="2" height="1" fill="#000"/><rect x="12" y="6" width="2" height="1" fill="#000"/><rect x="2" y="7" width="1" height="1" fill="#000"/><rect x="3" y="7" width="1" height="1" fill="#FFFF00"/><rect x="4" y="7" width="2" height="1" fill="#000"/><rect x="10" y="7" width="2" height="1" fill="#000"/><rect x="12" y="7" width="1" height="1" fill="#FFFF00"/><rect x="13" y="7" width="1" height="1" fill="#000"/><rect x="2" y="8" width="1" height="1" fill="#000"/><rect x="3" y="8" width="3" height="1" fill="#FFFF00"/><rect x="6" y="8" width="1" height="1" fill="#000"/><rect x="9" y="8" width="1" height="1" fill="#000"/><rect x="10" y="8" width="3" height="1" fill="#FFFF00"/><rect x="13" y="8" width="1" height="1" fill="#000"/><rect x="1" y="9" width="2" height="1" fill="#000"/><rect x="3" y="9" width="4" height="1" fill="#FFFF00"/><rect x="7" y="9" width="2" height="1" fill="#000"/><rect x="9" y="9" width="4" height="1" fill="#FFFF00"/><rect x="13" y="9" width="4" height="1" fill="#000"/><rect x="2" y="10" width="1" height="1" fill="#000"/><rect x="3" y="10" width="3" height="1" fill="#FFFF00"/><rect x="6" y="10" width="1" height="1" fill="#000"/><rect x="9" y="10" width="1" height="1" fill="#000"/><rect x="10" y="10" width="3" height="1" fill="#FFFF00"/><rect x="13" y="10" width="1" height="1" fill="#000"/><rect x="2" y="11" width="1" height="1" fill="#000"/><rect x="3" y="11" width="1" height="1" fill="#FFFF00"/><rect x="4" y="11" width="2" height="1" fill="#000"/><rect x="10" y="11" width="2" height="1" fill="#000"/><rect x="12" y="11" width="1" height="1" fill="#FFFF00"/><rect x="13" y="11" width="1" height="1" fill="#000"/><rect x="2" y="12" width="2" height="1" fill="#000"/><rect x="12" y="12" width="2" height="1" fill="#000"/></svg>
<div style="position:absolute;left:79px;top:80px;height:16px;box-sizing:border-box;border:1px dotted #000;background:#FF8C1A;"><div class="t" style="position:relative;background:#0078D7;padding:0 2px 0 1px;height:14px;line-height:14px;font-size:11px;font-weight:bold;color:#fff;letter-spacing:0.4px">Reduzier-Schieber</div></div>
<svg style="position:absolute;left:59px;top:102px" width="17" height="13"><rect x="2" y="0" width="2" height="1" fill="#000"/><rect x="12" y="0" width="2" height="1" fill="#000"/><rect x="2" y="1" width="1" height="1" fill="#000"/><rect x="4" y="1" width="2" height="1" fill="#000"/><rect x="10" y="1" width="2" height="1" fill="#000"/><rect x="13" y="1" width="1" height="1" fill="#000"/><rect x="2" y="2" width="1" height="1" fill="#000"/><rect x="6" y="2" width="1" height="1" fill="#000"/><rect x="9" y="2" width="1" height="1" fill="#000"/><rect x="13" y="2" width="1" height="1" fill="#000"/><rect x="1" y="3" width="2" height="1" fill="#000"/><rect x="7" y="3" width="2" height="1" fill="#000"/><rect x="13" y="3" width="4" height="1" fill="#000"/><rect x="2" y="4" width="1" height="1" fill="#000"/><rect x="6" y="4" width="1" height="1" fill="#000"/><rect x="9" y="4" width="1" height="1" fill="#000"/><rect x="13" y="4" width="1" height="1" fill="#000"/><rect x="2" y="5" width="1" height="1" fill="#000"/><rect x="4" y="5" width="2" height="1" fill="#000"/><rect x="10" y="5" width="2" height="1" fill="#000"/><rect x="13" y="5" width="1" height="1" fill="#000"/><rect x="2" y="6" width="2" height="1" fill="#000"/><rect x="12" y="6" width="2" height="1" fill="#000"/></svg>
<div class="t" style="left:80px;top:96px;height:16px;line-height:16px;font-size:11px;color:#000;letter-spacing:-0.2px">Plattenschieber mit Handrad</div>
<svg style="position:absolute;left:59px;top:118px" width="17" height="13"><rect x="2" y="0" width="2" height="1" fill="#000"/><rect x="12" y="0" width="2" height="1" fill="#000"/><rect x="2" y="1" width="1" height="1" fill="#000"/><rect x="4" y="1" width="2" height="1" fill="#000"/><rect x="10" y="1" width="2" height="1" fill="#000"/><rect x="13" y="1" width="1" height="1" fill="#000"/><rect x="2" y="2" width="1" height="1" fill="#000"/><rect x="6" y="2" width="1" height="1" fill="#000"/><rect x="9" y="2" width="1" height="1" fill="#000"/><rect x="13" y="2" width="1" height="1" fill="#000"/><rect x="1" y="3" width="2" height="1" fill="#000"/><rect x="7" y="3" width="2" height="1" fill="#000"/><rect x="13" y="3" width="4" height="1" fill="#000"/><rect x="2" y="4" width="1" height="1" fill="#000"/><rect x="6" y="4" width="1" height="1" fill="#000"/><rect x="9" y="4" width="1" height="1" fill="#000"/><rect x="13" y="4" width="1" height="1" fill="#000"/><rect x="2" y="5" width="1" height="1" fill="#000"/><rect x="4" y="5" width="2" height="1" fill="#000"/><rect x="10" y="5" width="2" height="1" fill="#000"/><rect x="13" y="5" width="1" height="1" fill="#000"/><rect x="2" y="6" width="2" height="1" fill="#000"/><rect x="12" y="6" width="2" height="1" fill="#000"/></svg>
<div class="t" style="left:80px;top:112px;height:16px;line-height:16px;font-size:11px;color:#000;letter-spacing:-0.2px">Zentrische Absperrklappe Doppelflansch,</div>
<svg style="position:absolute;left:59px;top:134px" width="17" height="13"><rect x="2" y="0" width="2" height="1" fill="#000"/><rect x="12" y="0" width="2" height="1" fill="#000"/><rect x="2" y="1" width="1" height="1" fill="#000"/><rect x="4" y="1" width="2" height="1" fill="#000"/><rect x="10" y="1" width="2" height="1" fill="#000"/><rect x="13" y="1" width="1" height="1" fill="#000"/><rect x="2" y="2" width="1" height="1" fill="#000"/><rect x="6" y="2" width="1" height="1" fill="#000"/><rect x="9" y="2" width="1" height="1" fill="#000"/><rect x="13" y="2" width="1" height="1" fill="#000"/><rect x="1" y="3" width="2" height="1" fill="#000"/><rect x="7" y="3" width="2" height="1" fill="#000"/><rect x="13" y="3" width="4" height="1" fill="#000"/><rect x="2" y="4" width="1" height="1" fill="#000"/><rect x="6" y="4" width="1" height="1" fill="#000"/><rect x="9" y="4" width="1" height="1" fill="#000"/><rect x="13" y="4" width="1" height="1" fill="#000"/><rect x="2" y="5" width="1" height="1" fill="#000"/><rect x="4" y="5" width="2" height="1" fill="#000"/><rect x="10" y="5" width="2" height="1" fill="#000"/><rect x="13" y="5" width="1" height="1" fill="#000"/><rect x="2" y="6" width="2" height="1" fill="#000"/><rect x="12" y="6" width="2" height="1" fill="#000"/></svg>
<div class="t" style="left:80px;top:128px;height:16px;line-height:16px;font-size:11px;color:#000;letter-spacing:-0.2px">Zentrische Absperrklappe Doppelflansch,</div>
<svg style="position:absolute;left:59px;top:150px" width="17" height="13"><rect x="2" y="0" width="2" height="1" fill="#000"/><rect x="12" y="0" width="2" height="1" fill="#000"/><rect x="2" y="1" width="1" height="1" fill="#000"/><rect x="4" y="1" width="2" height="1" fill="#000"/><rect x="10" y="1" width="2" height="1" fill="#000"/><rect x="13" y="1" width="1" height="1" fill="#000"/><rect x="2" y="2" width="1" height="1" fill="#000"/><rect x="6" y="2" width="1" height="1" fill="#000"/><rect x="9" y="2" width="1" height="1" fill="#000"/><rect x="13" y="2" width="1" height="1" fill="#000"/><rect x="1" y="3" width="2" height="1" fill="#000"/><rect x="7" y="3" width="2" height="1" fill="#000"/><rect x="13" y="3" width="4" height="1" fill="#000"/><rect x="2" y="4" width="1" height="1" fill="#000"/><rect x="6" y="4" width="1" height="1" fill="#000"/><rect x="9" y="4" width="1" height="1" fill="#000"/><rect x="13" y="4" width="1" height="1" fill="#000"/><rect x="2" y="5" width="1" height="1" fill="#000"/><rect x="4" y="5" width="2" height="1" fill="#000"/><rect x="10" y="5" width="2" height="1" fill="#000"/><rect x="13" y="5" width="1" height="1" fill="#000"/><rect x="2" y="6" width="2" height="1" fill="#000"/><rect x="12" y="6" width="2" height="1" fill="#000"/></svg>
<div class="t" style="left:80px;top:144px;height:16px;line-height:16px;font-size:11px;color:#000;letter-spacing:-0.2px">Absperrarmatur</div>
<svg style="position:absolute;left:59px;top:166px" width="17" height="13"><rect x="2" y="0" width="2" height="1" fill="#000"/><rect x="12" y="0" width="2" height="1" fill="#000"/><rect x="2" y="1" width="1" height="1" fill="#000"/><rect x="4" y="1" width="2" height="1" fill="#000"/><rect x="10" y="1" width="2" height="1" fill="#000"/><rect x="13" y="1" width="1" height="1" fill="#000"/><rect x="2" y="2" width="1" height="1" fill="#000"/><rect x="6" y="2" width="1" height="1" fill="#000"/><rect x="9" y="2" width="1" height="1" fill="#000"/><rect x="13" y="2" width="1" height="1" fill="#000"/><rect x="1" y="3" width="2" height="1" fill="#000"/><rect x="7" y="3" width="2" height="1" fill="#000"/><rect x="13" y="3" width="4" height="1" fill="#000"/><rect x="2" y="4" width="1" height="1" fill="#000"/><rect x="6" y="4" width="1" height="1" fill="#000"/><rect x="9" y="4" width="1" height="1" fill="#000"/><rect x="13" y="4" width="1" height="1" fill="#000"/><rect x="2" y="5" width="1" height="1" fill="#000"/><rect x="4" y="5" width="2" height="1" fill="#000"/><rect x="10" y="5" width="2" height="1" fill="#000"/><rect x="13" y="5" width="1" height="1" fill="#000"/><rect x="2" y="6" width="2" height="1" fill="#000"/><rect x="12" y="6" width="2" height="1" fill="#000"/></svg>
<div class="t" style="left:80px;top:160px;height:16px;line-height:16px;font-size:11px;color:#000;letter-spacing:-0.2px">Absperrarmatur</div>
<svg style="position:absolute;left:59px;top:182px" width="17" height="13"><rect x="2" y="0" width="2" height="1" fill="#000"/><rect x="12" y="0" width="2" height="1" fill="#000"/><rect x="2" y="1" width="1" height="1" fill="#000"/><rect x="4" y="1" width="2" height="1" fill="#000"/><rect x="10" y="1" width="2" height="1" fill="#000"/><rect x="13" y="1" width="1" height="1" fill="#000"/><rect x="2" y="2" width="1" height="1" fill="#000"/><rect x="6" y="2" width="1" height="1" fill="#000"/><rect x="9" y="2" width="1" height="1" fill="#000"/><rect x="13" y="2" width="1" height="1" fill="#000"/><rect x="1" y="3" width="2" height="1" fill="#000"/><rect x="7" y="3" width="2" height="1" fill="#000"/><rect x="13" y="3" width="4" height="1" fill="#000"/><rect x="2" y="4" width="1" height="1" fill="#000"/><rect x="6" y="4" width="1" height="1" fill="#000"/><rect x="9" y="4" width="1" height="1" fill="#000"/><rect x="13" y="4" width="1" height="1" fill="#000"/><rect x="2" y="5" width="1" height="1" fill="#000"/><rect x="4" y="5" width="2" height="1" fill="#000"/><rect x="10" y="5" width="2" height="1" fill="#000"/><rect x="13" y="5" width="1" height="1" fill="#000"/><rect x="2" y="6" width="2" height="1" fill="#000"/><rect x="12" y="6" width="2" height="1" fill="#000"/></svg>
<div class="t" style="left:80px;top:176px;height:16px;line-height:16px;font-size:11px;color:#000;letter-spacing:-0.2px">Kugelhahn mit Flansch</div>
<svg style="position:absolute;left:59px;top:198px" width="17" height="13"><rect x="2" y="0" width="2" height="1" fill="#000"/><rect x="12" y="0" width="2" height="1" fill="#000"/><rect x="2" y="1" width="1" height="1" fill="#000"/><rect x="4" y="1" width="2" height="1" fill="#000"/><rect x="10" y="1" width="2" height="1" fill="#000"/><rect x="13" y="1" width="1" height="1" fill="#000"/><rect x="2" y="2" width="1" height="1" fill="#000"/><rect x="6" y="2" width="1" height="1" fill="#000"/><rect x="9" y="2" width="1" height="1" fill="#000"/><rect x="13" y="2" width="1" height="1" fill="#000"/><rect x="1" y="3" width="2" height="1" fill="#000"/><rect x="7" y="3" width="2" height="1" fill="#000"/><rect x="13" y="3" width="4" height="1" fill="#000"/><rect x="2" y="4" width="1" height="1" fill="#000"/><rect x="6" y="4" width="1" height="1" fill="#000"/><rect x="9" y="4" width="1" height="1" fill="#000"/><rect x="13" y="4" width="1" height="1" fill="#000"/><rect x="2" y="5" width="1" height="1" fill="#000"/><rect x="4" y="5" width="2" height="1" fill="#000"/><rect x="10" y="5" width="2" height="1" fill="#000"/><rect x="13" y="5" width="1" height="1" fill="#000"/><rect x="2" y="6" width="2" height="1" fill="#000"/><rect x="12" y="6" width="2" height="1" fill="#000"/></svg>
<div class="t" style="left:80px;top:192px;height:16px;line-height:16px;font-size:11px;color:#000;letter-spacing:-0.2px">Kugelhahn mit Flansch</div>
<svg style="position:absolute;left:59px;top:214px" width="17" height="13"><rect x="2" y="0" width="2" height="1" fill="#000"/><rect x="12" y="0" width="2" height="1" fill="#000"/><rect x="2" y="1" width="1" height="1" fill="#000"/><rect x="4" y="1" width="2" height="1" fill="#000"/><rect x="10" y="1" width="2" height="1" fill="#000"/><rect x="13" y="1" width="1" height="1" fill="#000"/><rect x="2" y="2" width="1" height="1" fill="#000"/><rect x="6" y="2" width="1" height="1" fill="#000"/><rect x="9" y="2" width="1" height="1" fill="#000"/><rect x="13" y="2" width="1" height="1" fill="#000"/><rect x="1" y="3" width="2" height="1" fill="#000"/><rect x="7" y="3" width="2" height="1" fill="#000"/><rect x="13" y="3" width="4" height="1" fill="#000"/><rect x="2" y="4" width="1" height="1" fill="#000"/><rect x="6" y="4" width="1" height="1" fill="#000"/><rect x="9" y="4" width="1" height="1" fill="#000"/><rect x="13" y="4" width="1" height="1" fill="#000"/><rect x="2" y="5" width="1" height="1" fill="#000"/><rect x="4" y="5" width="2" height="1" fill="#000"/><rect x="10" y="5" width="2" height="1" fill="#000"/><rect x="13" y="5" width="1" height="1" fill="#000"/><rect x="2" y="6" width="2" height="1" fill="#000"/><rect x="12" y="6" width="2" height="1" fill="#000"/></svg>
<div class="t" style="left:80px;top:208px;height:16px;line-height:16px;font-size:11px;color:#000;letter-spacing:-0.2px">Kugelhahn mit Antrieb</div>
<svg style="position:absolute;left:59px;top:230px" width="17" height="13"><rect x="2" y="0" width="2" height="1" fill="#000"/><rect x="12" y="0" width="2" height="1" fill="#000"/><rect x="2" y="1" width="1" height="1" fill="#000"/><rect x="4" y="1" width="2" height="1" fill="#000"/><rect x="10" y="1" width="2" height="1" fill="#000"/><rect x="13" y="1" width="1" height="1" fill="#000"/><rect x="2" y="2" width="1" height="1" fill="#000"/><rect x="6" y="2" width="1" height="1" fill="#000"/><rect x="9" y="2" width="1" height="1" fill="#000"/><rect x="13" y="2" width="1" height="1" fill="#000"/><rect x="1" y="3" width="2" height="1" fill="#000"/><rect x="7" y="3" width="2" height="1" fill="#000"/><rect x="13" y="3" width="4" height="1" fill="#000"/><rect x="2" y="4" width="1" height="1" fill="#000"/><rect x="6" y="4" width="1" height="1" fill="#000"/><rect x="9" y="4" width="1" height="1" fill="#000"/><rect x="13" y="4" width="1" height="1" fill="#000"/><rect x="2" y="5" width="1" height="1" fill="#000"/><rect x="4" y="5" width="2" height="1" fill="#000"/><rect x="10" y="5" width="2" height="1" fill="#000"/><rect x="13" y="5" width="1" height="1" fill="#000"/><rect x="2" y="6" width="2" height="1" fill="#000"/><rect x="12" y="6" width="2" height="1" fill="#000"/></svg>
<div class="t" style="left:80px;top:224px;height:16px;line-height:16px;font-size:11px;color:#000;letter-spacing:-0.2px">Ventil mit Antrieb</div>
<svg style="position:absolute;left:59px;top:246px" width="17" height="13"><rect x="2" y="0" width="2" height="1" fill="#000"/><rect x="12" y="0" width="2" height="1" fill="#000"/><rect x="2" y="1" width="1" height="1" fill="#000"/><rect x="4" y="1" width="2" height="1" fill="#000"/><rect x="10" y="1" width="2" height="1" fill="#000"/><rect x="13" y="1" width="1" height="1" fill="#000"/><rect x="2" y="2" width="1" height="1" fill="#000"/><rect x="6" y="2" width="1" height="1" fill="#000"/><rect x="9" y="2" width="1" height="1" fill="#000"/><rect x="13" y="2" width="1" height="1" fill="#000"/><rect x="1" y="3" width="2" height="1" fill="#000"/><rect x="7" y="3" width="2" height="1" fill="#000"/><rect x="13" y="3" width="4" height="1" fill="#000"/><rect x="2" y="4" width="1" height="1" fill="#000"/><rect x="6" y="4" width="1" height="1" fill="#000"/><rect x="9" y="4" width="1" height="1" fill="#000"/><rect x="13" y="4" width="1" height="1" fill="#000"/><rect x="2" y="5" width="1" height="1" fill="#000"/><rect x="4" y="5" width="2" height="1" fill="#000"/><rect x="10" y="5" width="2" height="1" fill="#000"/><rect x="13" y="5" width="1" height="1" fill="#000"/><rect x="2" y="6" width="2" height="1" fill="#000"/><rect x="12" y="6" width="2" height="1" fill="#000"/></svg>
<div class="t" style="left:80px;top:240px;height:16px;line-height:16px;font-size:11px;color:#000;letter-spacing:-0.2px">Rückschlagventil mit Flansch</div>
<svg style="position:absolute;left:59px;top:262px" width="17" height="13"><rect x="2" y="0" width="2" height="1" fill="#000"/><rect x="12" y="0" width="2" height="1" fill="#000"/><rect x="2" y="1" width="1" height="1" fill="#000"/><rect x="4" y="1" width="2" height="1" fill="#000"/><rect x="10" y="1" width="2" height="1" fill="#000"/><rect x="13" y="1" width="1" height="1" fill="#000"/><rect x="2" y="2" width="1" height="1" fill="#000"/><rect x="6" y="2" width="1" height="1" fill="#000"/><rect x="9" y="2" width="1" height="1" fill="#000"/><rect x="13" y="2" width="1" height="1" fill="#000"/><rect x="1" y="3" width="2" height="1" fill="#000"/><rect x="7" y="3" width="2" height="1" fill="#000"/><rect x="13" y="3" width="4" height="1" fill="#000"/><rect x="2" y="4" width="1" height="1" fill="#000"/><rect x="6" y="4" width="1" height="1" fill="#000"/><rect x="9" y="4" width="1" height="1" fill="#000"/><rect x="13" y="4" width="1" height="1" fill="#000"/><rect x="2" y="5" width="1" height="1" fill="#000"/><rect x="4" y="5" width="2" height="1" fill="#000"/><rect x="10" y="5" width="2" height="1" fill="#000"/><rect x="13" y="5" width="1" height="1" fill="#000"/><rect x="2" y="6" width="2" height="1" fill="#000"/><rect x="12" y="6" width="2" height="1" fill="#000"/></svg>
<div class="t" style="left:80px;top:256px;height:16px;line-height:16px;font-size:11px;color:#000;letter-spacing:-0.2px">Rückschlagventil mit Flansch, Schräg</div>
<svg style="position:absolute;left:59px;top:278px" width="17" height="13"><rect x="2" y="0" width="2" height="1" fill="#000"/><rect x="12" y="0" width="2" height="1" fill="#000"/><rect x="2" y="1" width="1" height="1" fill="#000"/><rect x="4" y="1" width="2" height="1" fill="#000"/><rect x="10" y="1" width="2" height="1" fill="#000"/><rect x="13" y="1" width="1" height="1" fill="#000"/><rect x="2" y="2" width="1" height="1" fill="#000"/><rect x="6" y="2" width="1" height="1" fill="#000"/><rect x="9" y="2" width="1" height="1" fill="#000"/><rect x="13" y="2" width="1" height="1" fill="#000"/><rect x="1" y="3" width="2" height="1" fill="#000"/><rect x="7" y="3" width="2" height="1" fill="#000"/><rect x="13" y="3" width="4" height="1" fill="#000"/><rect x="2" y="4" width="1" height="1" fill="#000"/><rect x="6" y="4" width="1" height="1" fill="#000"/><rect x="9" y="4" width="1" height="1" fill="#000"/><rect x="13" y="4" width="1" height="1" fill="#000"/><rect x="2" y="5" width="1" height="1" fill="#000"/><rect x="4" y="5" width="2" height="1" fill="#000"/><rect x="10" y="5" width="2" height="1" fill="#000"/><rect x="13" y="5" width="1" height="1" fill="#000"/><rect x="2" y="6" width="2" height="1" fill="#000"/><rect x="12" y="6" width="2" height="1" fill="#000"/></svg>
<div class="t" style="left:80px;top:272px;height:16px;line-height:16px;font-size:11px;color:#000;letter-spacing:-0.2px">Kugelrückschlagventil</div>
<svg style="position:absolute;left:59px;top:294px" width="17" height="13"><rect x="2" y="0" width="2" height="1" fill="#000"/><rect x="12" y="0" width="2" height="1" fill="#000"/><rect x="2" y="1" width="1" height="1" fill="#000"/><rect x="4" y="1" width="2" height="1" fill="#000"/><rect x="10" y="1" width="2" height="1" fill="#000"/><rect x="13" y="1" width="1" height="1" fill="#000"/><rect x="2" y="2" width="1" height="1" fill="#000"/><rect x="6" y="2" width="1" height="1" fill="#000"/><rect x="9" y="2" width="1" height="1" fill="#000"/><rect x="13" y="2" width="1" height="1" fill="#000"/><rect x="1" y="3" width="2" height="1" fill="#000"/><rect x="7" y="3" width="2" height="1" fill="#000"/><rect x="13" y="3" width="4" height="1" fill="#000"/><rect x="2" y="4" width="1" height="1" fill="#000"/><rect x="6" y="4" width="1" height="1" fill="#000"/><rect x="9" y="4" width="1" height="1" fill="#000"/><rect x="13" y="4" width="1" height="1" fill="#000"/><rect x="2" y="5" width="1" height="1" fill="#000"/><rect x="4" y="5" width="2" height="1" fill="#000"/><rect x="10" y="5" width="2" height="1" fill="#000"/><rect x="13" y="5" width="1" height="1" fill="#000"/><rect x="2" y="6" width="2" height="1" fill="#000"/><rect x="12" y="6" width="2" height="1" fill="#000"/></svg>
<div class="t" style="left:80px;top:288px;height:16px;line-height:16px;font-size:11px;color:#000;letter-spacing:-0.2px">Rückschlagklappe</div>
<svg style="position:absolute;left:59px;top:310px" width="17" height="13"><rect x="2" y="0" width="2" height="1" fill="#000"/><rect x="12" y="0" width="2" height="1" fill="#000"/><rect x="2" y="1" width="1" height="1" fill="#000"/><rect x="4" y="1" width="2" height="1" fill="#000"/><rect x="10" y="1" width="2" height="1" fill="#000"/><rect x="13" y="1" width="1" height="1" fill="#000"/><rect x="2" y="2" width="1" height="1" fill="#000"/><rect x="6" y="2" width="1" height="1" fill="#000"/><rect x="9" y="2" width="1" height="1" fill="#000"/><rect x="13" y="2" width="1" height="1" fill="#000"/><rect x="1" y="3" width="2" height="1" fill="#000"/><rect x="7" y="3" width="2" height="1" fill="#000"/><rect x="13" y="3" width="4" height="1" fill="#000"/><rect x="2" y="4" width="1" height="1" fill="#000"/><rect x="6" y="4" width="1" height="1" fill="#000"/><rect x="9" y="4" width="1" height="1" fill="#000"/><rect x="13" y="4" width="1" height="1" fill="#000"/><rect x="2" y="5" width="1" height="1" fill="#000"/><rect x="4" y="5" width="2" height="1" fill="#000"/><rect x="10" y="5" width="2" height="1" fill="#000"/><rect x="13" y="5" width="1" height="1" fill="#000"/><rect x="2" y="6" width="2" height="1" fill="#000"/><rect x="12" y="6" width="2" height="1" fill="#000"/></svg>
<div class="t" style="left:80px;top:304px;height:16px;line-height:16px;font-size:11px;color:#000;letter-spacing:-0.2px">Rückflussverhinderer mit Flanschen</div>
<svg style="position:absolute;left:59px;top:326px" width="17" height="13"><rect x="2" y="0" width="2" height="1" fill="#000"/><rect x="12" y="0" width="2" height="1" fill="#000"/><rect x="2" y="1" width="1" height="1" fill="#000"/><rect x="4" y="1" width="2" height="1" fill="#000"/><rect x="10" y="1" width="2" height="1" fill="#000"/><rect x="13" y="1" width="1" height="1" fill="#000"/><rect x="2" y="2" width="1" height="1" fill="#000"/><rect x="6" y="2" width="1" height="1" fill="#000"/><rect x="9" y="2" width="1" height="1" fill="#000"/><rect x="13" y="2" width="1" height="1" fill="#000"/><rect x="1" y="3" width="2" height="1" fill="#000"/><rect x="7" y="3" width="2" height="1" fill="#000"/><rect x="13" y="3" width="4" height="1" fill="#000"/><rect x="2" y="4" width="1" height="1" fill="#000"/><rect x="6" y="4" width="1" height="1" fill="#000"/><rect x="9" y="4" width="1" height="1" fill="#000"/><rect x="13" y="4" width="1" height="1" fill="#000"/><rect x="2" y="5" width="1" height="1" fill="#000"/><rect x="4" y="5" width="2" height="1" fill="#000"/><rect x="10" y="5" width="2" height="1" fill="#000"/><rect x="13" y="5" width="1" height="1" fill="#000"/><rect x="2" y="6" width="2" height="1" fill="#000"/><rect x="12" y="6" width="2" height="1" fill="#000"/></svg>
<div class="t" style="left:80px;top:320px;height:16px;line-height:16px;font-size:11px;color:#000;letter-spacing:-0.2px">Dreiwegeventil</div>
<svg style="position:absolute;left:59px;top:342px" width="17" height="13"><rect x="2" y="0" width="2" height="1" fill="#000"/><rect x="12" y="0" width="2" height="1" fill="#000"/><rect x="2" y="1" width="1" height="1" fill="#000"/><rect x="4" y="1" width="2" height="1" fill="#000"/><rect x="10" y="1" width="2" height="1" fill="#000"/><rect x="13" y="1" width="1" height="1" fill="#000"/><rect x="2" y="2" width="1" height="1" fill="#000"/><rect x="6" y="2" width="1" height="1" fill="#000"/><rect x="9" y="2" width="1" height="1" fill="#000"/><rect x="13" y="2" width="1" height="1" fill="#000"/><rect x="1" y="3" width="2" height="1" fill="#000"/><rect x="7" y="3" width="2" height="1" fill="#000"/><rect x="13" y="3" width="4" height="1" fill="#000"/><rect x="2" y="4" width="1" height="1" fill="#000"/><rect x="6" y="4" width="1" height="1" fill="#000"/><rect x="9" y="4" width="1" height="1" fill="#000"/><rect x="13" y="4" width="1" height="1" fill="#000"/><rect x="2" y="5" width="1" height="1" fill="#000"/><rect x="4" y="5" width="2" height="1" fill="#000"/><rect x="10" y="5" width="2" height="1" fill="#000"/><rect x="13" y="5" width="1" height="1" fill="#000"/><rect x="2" y="6" width="2" height="1" fill="#000"/><rect x="12" y="6" width="2" height="1" fill="#000"/></svg>
<div class="t" style="left:80px;top:336px;height:16px;line-height:16px;font-size:11px;color:#000;letter-spacing:-0.2px">Schmutzfänger mit Flansch</div>
<svg style="position:absolute;left:59px;top:358px" width="17" height="13"><rect x="2" y="0" width="2" height="1" fill="#000"/><rect x="12" y="0" width="2" height="1" fill="#000"/><rect x="2" y="1" width="1" height="1" fill="#000"/><rect x="4" y="1" width="2" height="1" fill="#000"/><rect x="10" y="1" width="2" height="1" fill="#000"/><rect x="13" y="1" width="1" height="1" fill="#000"/><rect x="2" y="2" width="1" height="1" fill="#000"/><rect x="6" y="2" width="1" height="1" fill="#000"/><rect x="9" y="2" width="1" height="1" fill="#000"/><rect x="13" y="2" width="1" height="1" fill="#000"/><rect x="1" y="3" width="2" height="1" fill="#000"/><rect x="7" y="3" width="2" height="1" fill="#000"/><rect x="13" y="3" width="4" height="1" fill="#000"/><rect x="2" y="4" width="1" height="1" fill="#000"/><rect x="6" y="4" width="1" height="1" fill="#000"/><rect x="9" y="4" width="1" height="1" fill="#000"/><rect x="13" y="4" width="1" height="1" fill="#000"/><rect x="2" y="5" width="1" height="1" fill="#000"/><rect x="4" y="5" width="2" height="1" fill="#000"/><rect x="10" y="5" width="2" height="1" fill="#000"/><rect x="13" y="5" width="1" height="1" fill="#000"/><rect x="2" y="6" width="2" height="1" fill="#000"/><rect x="12" y="6" width="2" height="1" fill="#000"/></svg>
<div class="t" style="left:80px;top:352px;height:16px;line-height:16px;font-size:11px;color:#000;letter-spacing:-0.2px">Gasdruckregler</div>
<svg style="position:absolute;left:59px;top:374px" width="17" height="13"><rect x="2" y="0" width="2" height="1" fill="#000"/><rect x="12" y="0" width="2" height="1" fill="#000"/><rect x="2" y="1" width="1" height="1" fill="#000"/><rect x="4" y="1" width="2" height="1" fill="#000"/><rect x="10" y="1" width="2" height="1" fill="#000"/><rect x="13" y="1" width="1" height="1" fill="#000"/><rect x="2" y="2" width="1" height="1" fill="#000"/><rect x="6" y="2" width="1" height="1" fill="#000"/><rect x="9" y="2" width="1" height="1" fill="#000"/><rect x="13" y="2" width="1" height="1" fill="#000"/><rect x="1" y="3" width="2" height="1" fill="#000"/><rect x="7" y="3" width="2" height="1" fill="#000"/><rect x="13" y="3" width="4" height="1" fill="#000"/><rect x="2" y="4" width="1" height="1" fill="#000"/><rect x="6" y="4" width="1" height="1" fill="#000"/><rect x="9" y="4" width="1" height="1" fill="#000"/><rect x="13" y="4" width="1" height="1" fill="#000"/><rect x="2" y="5" width="1" height="1" fill="#000"/><rect x="4" y="5" width="2" height="1" fill="#000"/><rect x="10" y="5" width="2" height="1" fill="#000"/><rect x="13" y="5" width="1" height="1" fill="#000"/><rect x="2" y="6" width="2" height="1" fill="#000"/><rect x="12" y="6" width="2" height="1" fill="#000"/></svg>
<div class="t" style="left:80px;top:368px;height:16px;line-height:16px;font-size:11px;color:#000;letter-spacing:-0.2px">Reduzierung</div>
<svg style="position:absolute;left:59px;top:390px" width="17" height="13"><rect x="2" y="0" width="2" height="1" fill="#000"/><rect x="12" y="0" width="2" height="1" fill="#000"/><rect x="2" y="1" width="1" height="1" fill="#000"/><rect x="4" y="1" width="2" height="1" fill="#000"/><rect x="10" y="1" width="2" height="1" fill="#000"/><rect x="13" y="1" width="1" height="1" fill="#000"/><rect x="2" y="2" width="1" height="1" fill="#000"/><rect x="6" y="2" width="1" height="1" fill="#000"/><rect x="9" y="2" width="1" height="1" fill="#000"/><rect x="13" y="2" width="1" height="1" fill="#000"/><rect x="1" y="3" width="2" height="1" fill="#000"/><rect x="7" y="3" width="2" height="1" fill="#000"/><rect x="13" y="3" width="4" height="1" fill="#000"/><rect x="2" y="4" width="1" height="1" fill="#000"/><rect x="6" y="4" width="1" height="1" fill="#000"/><rect x="9" y="4" width="1" height="1" fill="#000"/><rect x="13" y="4" width="1" height="1" fill="#000"/><rect x="2" y="5" width="1" height="1" fill="#000"/><rect x="4" y="5" width="2" height="1" fill="#000"/><rect x="10" y="5" width="2" height="1" fill="#000"/><rect x="13" y="5" width="1" height="1" fill="#000"/><rect x="2" y="6" width="2" height="1" fill="#000"/><rect x="12" y="6" width="2" height="1" fill="#000"/></svg>
<div class="t" style="left:80px;top:384px;height:16px;line-height:16px;font-size:11px;color:#000;letter-spacing:-0.2px">Flanschverbindung mit Schwingungfdämpfer</div>
<svg style="position:absolute;left:26px;top:404px" width="9" height="9"><defs><linearGradient id="eg25" x1="0" y1="0" x2="1" y2="1"><stop offset="0" stop-color="#fff"/><stop offset="1" stop-color="#C8C8C8"/></linearGradient></defs><rect x="0.5" y="0.5" width="8" height="8" fill="url(#eg25)" stroke="#919191"/><rect x="2" y="4" width="5" height="1" fill="#2A3F9A"/><rect x="4" y="2" width="1" height="5" fill="#2A3F9A"/></svg>
<svg style="position:absolute;left:40px;top:400px" width="16" height="16"><path d="M1.5 13.5 V2.5 H6.5 L7.5 4.5 H15.5 V13.5 Z" fill="url(#fg)" stroke="#8A7A55" stroke-width="1"/><rect x="2" y="3" width="4.5" height="1.5" fill="#FFF2A8"/><path d="M1.5 13.5 H15.5 V4.5" fill="none" stroke="#2A1E00" stroke-width="1" opacity="0.75"/></svg>
<div class="t" style="left:61px;top:400px;height:16px;line-height:16px;font-size:11px;color:#000;letter-spacing:-0.2px">Zwischenflansch-Montagearmatur</div>
<svg style="position:absolute;left:26px;top:420px" width="9" height="9"><defs><linearGradient id="eg26" x1="0" y1="0" x2="1" y2="1"><stop offset="0" stop-color="#fff"/><stop offset="1" stop-color="#C8C8C8"/></linearGradient></defs><rect x="0.5" y="0.5" width="8" height="8" fill="url(#eg26)" stroke="#919191"/><rect x="2" y="4" width="5" height="1" fill="#2A3F9A"/><rect x="4" y="2" width="1" height="5" fill="#2A3F9A"/></svg>
<svg style="position:absolute;left:40px;top:416px" width="16" height="16"><path d="M1.5 13.5 V2.5 H6.5 L7.5 4.5 H15.5 V13.5 Z" fill="url(#fg)" stroke="#8A7A55" stroke-width="1"/><rect x="2" y="3" width="4.5" height="1.5" fill="#FFF2A8"/><path d="M1.5 13.5 H15.5 V4.5" fill="none" stroke="#2A1E00" stroke-width="1" opacity="0.75"/></svg>
<div class="t" style="left:61px;top:416px;height:16px;line-height:16px;font-size:11px;color:#000;letter-spacing:-0.2px">Gewindearmatur</div>
<svg style="position:absolute;left:26px;top:436px" width="9" height="9"><defs><linearGradient id="eg27" x1="0" y1="0" x2="1" y2="1"><stop offset="0" stop-color="#fff"/><stop offset="1" stop-color="#C8C8C8"/></linearGradient></defs><rect x="0.5" y="0.5" width="8" height="8" fill="url(#eg27)" stroke="#919191"/><rect x="2" y="4" width="5" height="1" fill="#2A3F9A"/><rect x="4" y="2" width="1" height="5" fill="#2A3F9A"/></svg>
<svg style="position:absolute;left:40px;top:432px" width="16" height="16"><path d="M1.5 13.5 V2.5 H6.5 L7.5 4.5 H15.5 V13.5 Z" fill="url(#fg)" stroke="#8A7A55" stroke-width="1"/><rect x="2" y="3" width="4.5" height="1.5" fill="#FFF2A8"/><path d="M1.5 13.5 H15.5 V4.5" fill="none" stroke="#2A1E00" stroke-width="1" opacity="0.75"/></svg>
<div class="t" style="left:61px;top:432px;height:16px;line-height:16px;font-size:11px;color:#000;letter-spacing:-0.2px">Geschweißte Armatur</div>
<svg style="position:absolute;left:26px;top:452px" width="9" height="9"><defs><linearGradient id="eg28" x1="0" y1="0" x2="1" y2="1"><stop offset="0" stop-color="#fff"/><stop offset="1" stop-color="#C8C8C8"/></linearGradient></defs><rect x="0.5" y="0.5" width="8" height="8" fill="url(#eg28)" stroke="#919191"/><rect x="2" y="4" width="5" height="1" fill="#2A3F9A"/><rect x="4" y="2" width="1" height="5" fill="#2A3F9A"/></svg>
<svg style="position:absolute;left:40px;top:448px" width="16" height="16"><path d="M1.5 13.5 V2.5 H6.5 L7.5 4.5 H15.5 V13.5 Z" fill="url(#fg)" stroke="#8A7A55" stroke-width="1"/><rect x="2" y="3" width="4.5" height="1.5" fill="#FFF2A8"/><path d="M1.5 13.5 H15.5 V4.5" fill="none" stroke="#2A1E00" stroke-width="1" opacity="0.75"/></svg>
<div class="t" style="left:61px;top:448px;height:16px;line-height:16px;font-size:11px;color:#000;letter-spacing:-0.2px">Regelventile</div>
<svg style="position:absolute;left:26px;top:468px" width="9" height="9"><defs><linearGradient id="eg29" x1="0" y1="0" x2="1" y2="1"><stop offset="0" stop-color="#fff"/><stop offset="1" stop-color="#C8C8C8"/></linearGradient></defs><rect x="0.5" y="0.5" width="8" height="8" fill="url(#eg29)" stroke="#919191"/><rect x="2" y="4" width="5" height="1" fill="#2A3F9A"/><rect x="4" y="2" width="1" height="5" fill="#2A3F9A"/></svg>
<svg style="position:absolute;left:40px;top:464px" width="16" height="16"><path d="M1.5 13.5 V2.5 H6.5 L7.5 4.5 H15.5 V13.5 Z" fill="url(#fg)" stroke="#8A7A55" stroke-width="1"/><rect x="2" y="3" width="4.5" height="1.5" fill="#FFF2A8"/><path d="M1.5 13.5 H15.5 V4.5" fill="none" stroke="#2A1E00" stroke-width="1" opacity="0.75"/></svg>
<div class="t" style="left:61px;top:464px;height:16px;line-height:16px;font-size:11px;color:#000;letter-spacing:-0.2px">Antrieb für Regelventil</div>
</div>
<div style="position:absolute;left:291px;top:72px;width:16px;height:477px;background:#F0F0F0;"></div>
<div style="position:absolute;left:291px;top:89px;width:15px;height:285px;background:#CDCDCD;"></div>
<svg style="position:absolute;left:295px;top:78px;" width="7" height="6" viewBox="0 0 7 6"><rect x="3" y="0" width="1" height="1" fill="#606060"/><rect x="2" y="1" width="3" height="1" fill="#606060"/><rect x="1" y="2" width="2" height="1" fill="#606060"/><rect x="4" y="2" width="2" height="1" fill="#606060"/><rect x="0" y="3" width="2" height="1" fill="#606060"/><rect x="5" y="3" width="2" height="1" fill="#606060"/><rect x="0" y="4" width="2" height="1" fill="#606060"/><rect x="5" y="4" width="2" height="1" fill="#606060"/><rect x="0" y="5" width="1" height="1" fill="#606060"/><rect x="6" y="5" width="1" height="1" fill="#606060"/></svg>
<svg style="position:absolute;left:295px;top:537px;" width="7" height="6" viewBox="0 0 7 6"><rect x="0" y="0" width="1" height="1" fill="#606060"/><rect x="6" y="0" width="1" height="1" fill="#606060"/><rect x="0" y="1" width="2" height="1" fill="#606060"/><rect x="5" y="1" width="2" height="1" fill="#606060"/><rect x="0" y="2" width="2" height="1" fill="#606060"/><rect x="5" y="2" width="2" height="1" fill="#606060"/><rect x="1" y="3" width="2" height="1" fill="#606060"/><rect x="4" y="3" width="2" height="1" fill="#606060"/><rect x="2" y="4" width="3" height="1" fill="#606060"/><rect x="3" y="5" width="1" height="1" fill="#606060"/></svg>
<div style="position:absolute;left:14px;top:549px;width:277px;height:16px;background:#F0F0F0;"></div>
<div style="position:absolute;left:31px;top:549px;width:221px;height:15px;background:#CDCDCD;"></div>
<svg style="position:absolute;left:19px;top:553px;" width="6" height="7" viewBox="0 0 6 7"><rect x="3" y="0" width="3" height="1" fill="#606060"/><rect x="2" y="1" width="3" height="1" fill="#606060"/><rect x="1" y="2" width="2" height="1" fill="#606060"/><rect x="0" y="3" width="2" height="1" fill="#606060"/><rect x="1" y="4" width="2" height="1" fill="#606060"/><rect x="2" y="5" width="3" height="1" fill="#606060"/><rect x="3" y="6" width="3" height="1" fill="#606060"/></svg>
<svg style="position:absolute;left:279px;top:553px;" width="6" height="7" viewBox="0 0 6 7"><rect x="0" y="0" width="3" height="1" fill="#606060"/><rect x="1" y="1" width="3" height="1" fill="#606060"/><rect x="3" y="2" width="2" height="1" fill="#606060"/><rect x="4" y="3" width="2" height="1" fill="#606060"/><rect x="3" y="4" width="2" height="1" fill="#606060"/><rect x="1" y="5" width="3" height="1" fill="#606060"/><rect x="0" y="6" width="3" height="1" fill="#606060"/></svg>
<div style="position:absolute;left:291px;top:549px;width:16px;height:16px;background:#F0F0F0;"></div>
<div style="position:absolute;left:312px;top:70px;width:595px;height:251px;box-sizing:border-box;border:1px solid #828790;background:#F0F0F0;"></div>
<div style="position:absolute;left:313px;top:71px;width:593px;height:249px;box-sizing:border-box;border:1px solid #fff;"></div>
<div style="position:absolute;left:314px;top:72px;width:592px;height:230px;overflow:hidden;">
<div style="position:absolute;left:-314px;top:-72px;width:916px;height:400px;">
<div style="position:absolute;left:316px;top:74px;width:112px;height:99px;box-sizing:border-box;border-top:1px solid #fff;border-left:1px solid #fff;border-right:1px solid #696969;border-bottom:1px solid #696969;"></div>
<div style="position:absolute;left:320px;top:78px;width:105px;height:79px;box-sizing:border-box;background:#fff;border-top:1px solid #696969;border-left:1px solid #696969;border-right:1px solid #fff;border-bottom:1px solid #fff;overflow:hidden;"><svg style="position:absolute;left:-1px;top:-1px" width="105" height="79" viewBox="0 0 105 79"><g transform="translate(31,18)" style="shape-rendering:geometricPrecision"><g transform="translate(0,3)"><defs><linearGradient id="fo_b" x1="0" y1="0" x2="0" y2="1"><stop offset="0" stop-color="#FFF8B0"/><stop offset="0.6" stop-color="#FFD860"/><stop offset="1" stop-color="#F0B030"/></linearGradient><linearGradient id="fo_f" x1="0" y1="0" x2="0" y2="1"><stop offset="0" stop-color="#FFFCC8"/><stop offset="0.45" stop-color="#FFEE88"/><stop offset="1" stop-color="#F5C850"/></linearGradient><linearGradient id="fo_g" x1="0" y1="0" x2="1" y2="1"><stop offset="0" stop-color="#1E9A1E"/><stop offset="0.6" stop-color="#5FD04A"/><stop offset="1" stop-color="#2E8A2E"/></linearGradient></defs><path d="M1.5 4 Q1.5 1.5 4 1.5 H13.5 L16.5 5 H31 Q32.5 5 32.5 6.5 V30 L3 36 Q1.5 36 1.5 34 Z" fill="url(#fo_b)" stroke="#D9A010" stroke-width="1"/><path d="M3 36.5 L9 17 Q9.5 16 11 15.8 L15 15 L17 12 Q17.5 11 19 11 H42.5 L34 29.5 Q33 30.5 31 31 Z" fill="url(#fo_f)" stroke="#D9A010" stroke-width="1"/><path d="M4.5 35 L10 17.5" stroke="#fff" stroke-width="1" opacity="0.9"/></g><path d="M9 1 H27 L22 8 Q26.5 10.5 26.7 14.5 L20 24.5 Q18.5 19 17.5 16 L9 18.5 Z" fill="url(#fo_g)" stroke="#2A6A2A" stroke-width="0.8"/></g></svg></div>
<div class="t" style="left:316px;top:157px;width:112px;height:15px;line-height:15px;font-size:11.5px;letter-spacing:-0.3px;text-align:center;color:#000;overflow:hidden">..</div>
<div style="position:absolute;left:432px;top:74px;width:112px;height:99px;box-sizing:border-box;border-top:1px solid #fff;border-left:1px solid #fff;border-right:1px solid #696969;border-bottom:1px solid #696969;"></div>
<div style="position:absolute;left:436px;top:78px;width:105px;height:79px;box-sizing:border-box;background:#000;border-top:1px solid #696969;border-left:1px solid #696969;border-right:1px solid #fff;border-bottom:1px solid #fff;overflow:hidden;"><svg style="position:absolute;left:-1px;top:-1px" width="105" height="79" viewBox="0 0 105 79"><g fill="none" stroke="#FF0040" stroke-width="1"><rect x="37.5" y="9.5" width="32" height="3"/><polyline points="40.5,12.5 46.5,14.5 60.5,14.5 66.5,12.5"/><rect x="49.5" y="13.5" width="8" height="8"/><rect x="47.5" y="21.5" width="12" height="9"/><rect x="46.5" y="30.5" width="14" height="2"/><rect x="45.5" y="32.5" width="16" height="3"/><polyline points="46.5,35.5 46.5,44.5"/><polyline points="60.5,35.5 60.5,44.5"/><polyline points="32.5,44.5 46.5,44.5"/><polyline points="60.5,44.5 73.5,44.5"/><polyline points="32.5,63.5 73.5,63.5"/><rect x="29.5" y="37.5" width="3" height="35"/><rect x="73.5" y="37.5" width="3" height="35"/></g><g fill="none" stroke="#D4A46A" stroke-width="1"><polyline points="46.5,44.5 50.5,61.5 55.5,61.5 60.5,44.5"/></g><g fill="none" stroke="#6AA8DA" stroke-width="1"><polyline points="53.5,9.5 53.5,63.5"/><polyline points="30.5,54.5 76.5,54.5"/></g></svg></div>
<div class="t" style="left:432px;top:157px;width:112px;height:15px;line-height:15px;font-size:11.5px;letter-spacing:-0.3px;text-align:center;color:#000;overflow:hidden">Absperrschieber mi...</div>
<div style="position:absolute;left:549px;top:74px;width:111px;height:99px;background:#0078D7;"></div>
<div style="position:absolute;left:552px;top:78px;width:105px;height:79px;box-sizing:border-box;background:#000;border-top:1px solid #696969;border-left:1px solid #696969;border-right:1px solid #fff;border-bottom:1px solid #fff;overflow:hidden;"><svg style="position:absolute;left:-1px;top:-1px" width="105" height="79" viewBox="0 0 105 79"><g fill="none" stroke="#FF0000" stroke-width="1"><rect x="40.5" y="7.5" width="29" height="3"/><polyline points="45.5,10.5 52.5,12.5 58.5,12.5 65.5,10.5"/><rect x="50.5" y="11.5" width="9" height="20"/><polyline points="50.5,16.5 59.5,16.5"/><rect x="47.5" y="31.5" width="15" height="5"/><polyline points="47.5,34.5 62.5,34.5"/><polyline points="48.5,36.5 48.5,59.5 51.5,62.5 58.5,62.5 61.5,59.5 61.5,36.5"/><rect x="43.5" y="39.5" width="2" height="27"/><rect x="64.5" y="41.5" width="2" height="24"/><polyline points="45.5,43.5 48.5,43.5"/><polyline points="45.5,61.5 48.5,61.5"/><polyline points="61.5,46.5 64.5,46.5"/><polyline points="61.5,59.5 64.5,59.5"/></g><g fill="none" stroke="#6AA8DA" stroke-width="1"><polyline points="44.5,53.5 65.5,53.5"/></g></svg></div>
<div class="t" style="left:548px;top:157px;width:112px;height:15px;line-height:15px;font-size:11.5px;letter-spacing:-0.3px;text-align:center;color:#fff;overflow:hidden">Reduzier-Schieber</div>
<div style="position:absolute;left:664px;top:74px;width:112px;height:99px;box-sizing:border-box;border-top:1px solid #fff;border-left:1px solid #fff;border-right:1px solid #696969;border-bottom:1px solid #696969;"></div>
<div style="position:absolute;left:668px;top:78px;width:105px;height:79px;box-sizing:border-box;background:#000;border-top:1px solid #696969;border-left:1px solid #696969;border-right:1px solid #fff;border-bottom:1px solid #fff;overflow:hidden;"><svg style="position:absolute;left:-1px;top:-1px" width="105" height="79" viewBox="0 0 105 79"><g fill="none" stroke="#FF0040" stroke-width="1"><rect x="48.5" y="18.5" width="15" height="3"/><rect x="54.5" y="13.5" width="4" height="5"/><rect x="52.5" y="21.5" width="8" height="11"/><rect x="45.5" y="24.5" width="3" height="38"/><rect x="63.5" y="24.5" width="4" height="38"/><polyline points="48.5,32.5 63.5,32.5"/><polyline points="48.5,53.5 63.5,53.5"/><rect x="52.5" y="53.5" width="8" height="6"/></g><g fill="none" stroke="#D4A46A" stroke-width="1"><polyline points="52.5,31.5 54.5,33.5 58.5,33.5 60.5,31.5"/><polyline points="53.5,53.5 59.5,53.5"/></g><g fill="none" stroke="#6AA8DA" stroke-width="1"><polyline points="56.5,13.5 56.5,59.5"/><polyline points="45.5,43.5 68.5,43.5"/></g></svg></div>
<div class="t" style="left:664px;top:157px;width:112px;height:15px;line-height:15px;font-size:11.5px;letter-spacing:-0.3px;text-align:center;color:#000;overflow:hidden">Zentrische Absperr...</div>
<div style="position:absolute;left:780px;top:74px;width:112px;height:99px;box-sizing:border-box;border-top:1px solid #fff;border-left:1px solid #fff;border-right:1px solid #696969;border-bottom:1px solid #696969;"></div>
<div style="position:absolute;left:784px;top:78px;width:105px;height:79px;box-sizing:border-box;background:#000;border-top:1px solid #696969;border-left:1px solid #696969;border-right:1px solid #fff;border-bottom:1px solid #fff;overflow:hidden;"><svg style="position:absolute;left:-1px;top:-1px" width="105" height="79" viewBox="0 0 105 79"><g fill="none" stroke="#FF0000" stroke-width="1"><rect x="34.5" y="16.5" width="5" height="43"/><rect x="85.5" y="16.5" width="4" height="43"/><polyline points="39.5,29.5 52.5,29.5"/><polyline points="73.5,29.5 85.5,29.5"/><polyline points="39.5,46.5 52.5,46.5"/><polyline points="73.5,46.5 85.5,46.5"/></g><g fill="none" stroke="#FF0000" stroke-width="1" style="shape-rendering:geometricPrecision" transform="translate(62.5,38.5)"><circle r="13"/><circle r="11"/><circle cy="-2" r="1.5"/><path d="M-1.5 -2.5 Q-6 -7 -9 -5 Q-3 -1 -1.5 -1 M1.5 -2.5 Q6 -7 9 -5 Q3 -1 1.5 -1 M-1 0 Q-5 6 -2 10.5 M1 0 Q5 6 2 10.5 M-9 -5 Q-11 3 -2 10.5 M9 -5 Q11 3 2 10.5"/></g><g fill="none" stroke="#D4A46A" stroke-width="1"><polyline points="42.5,28.5 52.5,30.5"/><polyline points="73.5,30.5 83.5,28.5"/><polyline points="42.5,47.5 52.5,45.5"/><polyline points="73.5,45.5 83.5,47.5"/></g><g fill="none" stroke="#6AA8DA" stroke-width="1" stroke-dasharray="6,2,1,2"><polyline points="34.5,38.5 90.5,38.5"/></g></svg></div>
<div class="t" style="left:780px;top:157px;width:112px;height:15px;line-height:15px;font-size:11.5px;letter-spacing:-0.3px;text-align:center;color:#000;overflow:hidden">Absperrarmatur</div>
<div style="position:absolute;left:896px;top:74px;width:12px;height:99px;box-sizing:border-box;border-top:1px solid #fff;border-left:1px solid #fff;border-right:1px solid #696969;border-bottom:1px solid #696969;"></div>
<div style="position:absolute;left:900px;top:78px;width:8px;height:79px;box-sizing:border-box;background:#000;border-top:1px solid #696969;border-left:1px solid #696969;border-right:1px solid #fff;border-bottom:1px solid #fff;overflow:hidden;"></div>
<div class="t" style="left:896px;top:157px;width:12px;height:15px;line-height:15px;font-size:11.5px;letter-spacing:-0.3px;text-align:center;color:#000;overflow:hidden">K</div>
<div style="position:absolute;left:316px;top:178px;width:112px;height:99px;box-sizing:border-box;border-top:1px solid #fff;border-left:1px solid #fff;border-right:1px solid #696969;border-bottom:1px solid #696969;"></div>
<div style="position:absolute;left:320px;top:182px;width:105px;height:79px;box-sizing:border-box;background:#fff;border-top:1px solid #696969;border-left:1px solid #696969;border-right:1px solid #fff;border-bottom:1px solid #fff;overflow:hidden;"><svg style="position:absolute;left:-1px;top:-1px" width="105" height="79" viewBox="0 0 105 79"><g transform="translate(31,21)" style="shape-rendering:geometricPrecision"><defs><linearGradient id="fo_b" x1="0" y1="0" x2="0" y2="1"><stop offset="0" stop-color="#FFF8B0"/><stop offset="0.6" stop-color="#FFD860"/><stop offset="1" stop-color="#F0B030"/></linearGradient><linearGradient id="fo_f" x1="0" y1="0" x2="0" y2="1"><stop offset="0" stop-color="#FFFCC8"/><stop offset="0.45" stop-color="#FFEE88"/><stop offset="1" stop-color="#F5C850"/></linearGradient><linearGradient id="fo_g" x1="0" y1="0" x2="1" y2="1"><stop offset="0" stop-color="#1E9A1E"/><stop offset="0.6" stop-color="#5FD04A"/><stop offset="1" stop-color="#2E8A2E"/></linearGradient></defs><path d="M1.5 4 Q1.5 1.5 4 1.5 H13.5 L16.5 5 H31 Q32.5 5 32.5 6.5 V30 L3 36 Q1.5 36 1.5 34 Z" fill="url(#fo_b)" stroke="#D9A010" stroke-width="1"/><path d="M3 36.5 L9 17 Q9.5 16 11 15.8 L15 15 L17 12 Q17.5 11 19 11 H42.5 L34 29.5 Q33 30.5 31 31 Z" fill="url(#fo_f)" stroke="#D9A010" stroke-width="1"/><path d="M4.5 35 L10 17.5" stroke="#fff" stroke-width="1" opacity="0.9"/></g></svg></div>
<div class="t" style="left:316px;top:261px;width:112px;height:15px;line-height:15px;font-size:11.5px;letter-spacing:-0.3px;text-align:center;color:#000;overflow:hidden">Absperrschiebern</div>
<div style="position:absolute;left:432px;top:178px;width:112px;height:99px;box-sizing:border-box;border-top:1px solid #fff;border-left:1px solid #fff;border-right:1px solid #696969;border-bottom:1px solid #696969;"></div>
<div style="position:absolute;left:436px;top:182px;width:105px;height:79px;box-sizing:border-box;background:#000;border-top:1px solid #696969;border-left:1px solid #696969;border-right:1px solid #fff;border-bottom:1px solid #fff;overflow:hidden;"><svg style="position:absolute;left:-1px;top:-1px" width="105" height="79" viewBox="0 0 105 79"><g fill="none" stroke="#FF0040" stroke-width="1"><rect x="40.5" y="12.5" width="28" height="3"/><polyline points="46.5,15.5 50.5,17.5 58.5,17.5 62.5,15.5"/><polyline points="50.5,17.5 48.5,32.5"/><polyline points="58.5,17.5 60.5,32.5"/><polyline points="50.5,17.5 58.5,17.5"/><rect x="46.5" y="32.5" width="15" height="4"/><polyline points="48.5,36.5 48.5,46.5"/><polyline points="59.5,36.5 59.5,46.5"/><rect x="40.5" y="36.5" width="4" height="30"/><rect x="63.5" y="36.5" width="4" height="30"/><polyline points="44.5,46.5 48.5,46.5"/><polyline points="59.5,46.5 63.5,46.5"/><polyline points="44.5,56.5 63.5,56.5"/></g><g fill="none" stroke="#D4A46A" stroke-width="1"><polyline points="48.5,46.5 51.5,53.5 56.5,53.5 59.5,46.5"/></g><g fill="none" stroke="#6AA8DA" stroke-width="1"><polyline points="41.5,51.5 67.5,51.5"/></g><g fill="none" stroke="#6AA8DA" stroke-dasharray="8,2"><polyline points="53.5,12.5 53.5,56.5"/></g></svg></div>
<div class="t" style="left:432px;top:261px;width:112px;height:15px;line-height:15px;font-size:11.5px;letter-spacing:-0.3px;text-align:center;color:#000;overflow:hidden">Hausanschluss-Sch...</div>
<div style="position:absolute;left:548px;top:178px;width:112px;height:99px;box-sizing:border-box;border-top:1px solid #fff;border-left:1px solid #fff;border-right:1px solid #696969;border-bottom:1px solid #696969;"></div>
<div style="position:absolute;left:552px;top:182px;width:105px;height:79px;box-sizing:border-box;background:#000;border-top:1px solid #696969;border-left:1px solid #696969;border-right:1px solid #fff;border-bottom:1px solid #fff;overflow:hidden;"><svg style="position:absolute;left:-1px;top:-1px" width="105" height="79" viewBox="0 0 105 79"><g fill="none" stroke="#FF0000" stroke-width="1"><rect x="39.5" y="6.5" width="32" height="3"/><polyline points="45.5,9.5 49.5,12.5 61.5,12.5 65.5,9.5"/><rect x="47.5" y="15.5" width="12" height="21"/><rect x="52.5" y="18.5" width="3" height="3"/><rect x="49.5" y="17.5" width="8" height="17"/><rect x="46.5" y="36.5" width="14" height="3"/><rect x="50.5" y="39.5" width="7" height="28"/><rect x="51.5" y="41.5" width="4" height="24"/><rect x="51.5" y="67.5" width="4" height="3"/><polyline points="50.5,47.5 57.5,47.5"/><polyline points="50.5,50.5 57.5,50.5"/><polyline points="52.5,21.5 52.5,36.5"/></g><g fill="none" stroke="#6AA8DA" stroke-width="1"><polyline points="53.5,6.5 53.5,56.5"/><polyline points="50.5,56.5 57.5,56.5"/></g></svg></div>
<div class="t" style="left:548px;top:261px;width:112px;height:15px;line-height:15px;font-size:11.5px;letter-spacing:-0.3px;text-align:center;color:#000;overflow:hidden">Plattenschieber mit...</div>
<div style="position:absolute;left:664px;top:178px;width:112px;height:99px;box-sizing:border-box;border-top:1px solid #fff;border-left:1px solid #fff;border-right:1px solid #696969;border-bottom:1px solid #696969;"></div>
<div style="position:absolute;left:668px;top:182px;width:105px;height:79px;box-sizing:border-box;background:#000;border-top:1px solid #696969;border-left:1px solid #696969;border-right:1px solid #fff;border-bottom:1px solid #fff;overflow:hidden;"><svg style="position:absolute;left:-1px;top:-1px" width="105" height="79" viewBox="0 0 105 79"><g fill="none" stroke="#FF0040" stroke-width="1"><rect x="48.5" y="17.5" width="15" height="3"/><rect x="54.5" y="12.5" width="4" height="5"/><rect x="52.5" y="20.5" width="8" height="12"/><rect x="40.5" y="23.5" width="3" height="38"/><rect x="69.5" y="23.5" width="3" height="38"/><polyline points="43.5,32.5 69.5,32.5"/><polyline points="43.5,52.5 69.5,52.5"/><rect x="52.5" y="52.5" width="8" height="7"/></g><g fill="none" stroke="#D4A46A" stroke-width="1"><polyline points="52.5,31.5 54.5,33.5 58.5,33.5 60.5,31.5"/><polyline points="53.5,52.5 59.5,52.5"/></g><g fill="none" stroke="#6AA8DA" stroke-width="1"><polyline points="56.5,12.5 56.5,59.5"/><polyline points="40.5,42.5 73.5,42.5"/></g></svg></div>
<div class="t" style="left:664px;top:261px;width:112px;height:15px;line-height:15px;font-size:11.5px;letter-spacing:-0.3px;text-align:center;color:#000;overflow:hidden">Zentrische Absperr...</div>
<div style="position:absolute;left:780px;top:178px;width:112px;height:99px;box-sizing:border-box;border-top:1px solid #fff;border-left:1px solid #fff;border-right:1px solid #696969;border-bottom:1px solid #696969;"></div>
<div style="position:absolute;left:784px;top:182px;width:105px;height:79px;box-sizing:border-box;background:#000;border-top:1px solid #696969;border-left:1px solid #696969;border-right:1px solid #fff;border-bottom:1px solid #fff;overflow:hidden;"><svg style="position:absolute;left:-1px;top:-1px" width="105" height="79" viewBox="0 0 105 79"><g fill="none" stroke="#FF0000" stroke-width="1"><rect x="42.5" y="3.5" width="25" height="3"/><polyline points="48.5,7.5 63.5,7.5"/><rect x="47.5" y="34.5" width="16" height="8"/><polyline points="47.5,37.5 63.5,37.5"/><polyline points="47.5,39.5 63.5,39.5"/><rect x="33.5" y="35.5" width="3" height="31"/><rect x="73.5" y="35.5" width="3" height="31"/><polyline points="47.5,42.5 47.5,51.5 49.5,53.5 58.5,53.5 73.5,59.5"/><polyline points="63.5,42.5 73.5,45.5"/><polyline points="39.5,45.5 47.5,49.5"/><polyline points="36.5,57.5 41.5,57.5 49.5,63.5 54.5,63.5 58.5,58.5 58.5,53.5"/></g><g fill="none" stroke="#FF0000" stroke-width="1" style="shape-rendering:geometricPrecision"><path d="M48 34 Q46 18 55.5 8.5 Q65 18 63 34"/><path d="M51.5 33 Q50 20 55.5 11 Q61 20 59.5 33"/><rect x="53.5" y="18.5" width="5" height="10"/></g><g fill="none" stroke="#D4A46A" stroke-width="1"><polyline points="37.5,44.5 47.5,43.5"/><polyline points="55.5,62.5 72.5,60.5"/></g><g fill="none" stroke="#6AA8DA" stroke-width="1" stroke-dasharray="7,2,2,2"><polyline points="34.5,51.5 76.5,51.5"/></g><g fill="none" stroke="#6AA8DA" stroke-dasharray="14,2"><polyline points="55.5,3.5 55.5,51.5"/></g></svg></div>
<div class="t" style="left:780px;top:261px;width:112px;height:15px;line-height:15px;font-size:11.5px;letter-spacing:-0.3px;text-align:center;color:#000;overflow:hidden">Absperrarmatur</div>
<div style="position:absolute;left:896px;top:178px;width:12px;height:99px;box-sizing:border-box;border-top:1px solid #fff;border-left:1px solid #fff;border-right:1px solid #696969;border-bottom:1px solid #696969;"></div>
<div style="position:absolute;left:900px;top:182px;width:8px;height:79px;box-sizing:border-box;background:#000;border-top:1px solid #696969;border-left:1px solid #696969;border-right:1px solid #fff;border-bottom:1px solid #fff;overflow:hidden;"></div>
<div class="t" style="left:896px;top:261px;width:12px;height:15px;line-height:15px;font-size:11.5px;letter-spacing:-0.3px;text-align:center;color:#000;overflow:hidden">K</div>
</div></div>
<div style="position:absolute;left:314px;top:302px;width:592px;height:1px;background:#FFFFFF;"></div>
<div style="position:absolute;left:314px;top:303px;width:592px;height:16px;background:#F0F0F0;"></div>
<div style="position:absolute;left:331px;top:303px;width:232px;height:15px;background:#CDCDCD;"></div>
<svg style="position:absolute;left:319px;top:307px;" width="6" height="7" viewBox="0 0 6 7"><rect x="3" y="0" width="3" height="1" fill="#606060"/><rect x="2" y="1" width="3" height="1" fill="#606060"/><rect x="1" y="2" width="2" height="1" fill="#606060"/><rect x="0" y="3" width="2" height="1" fill="#606060"/><rect x="1" y="4" width="2" height="1" fill="#606060"/><rect x="2" y="5" width="3" height="1" fill="#606060"/><rect x="3" y="6" width="3" height="1" fill="#606060"/></svg>
<svg style="position:absolute;left:894px;top:306px;" width="6" height="7" viewBox="0 0 6 7"><rect x="0" y="0" width="3" height="1" fill="#606060"/><rect x="1" y="1" width="3" height="1" fill="#606060"/><rect x="3" y="2" width="2" height="1" fill="#606060"/><rect x="4" y="3" width="2" height="1" fill="#606060"/><rect x="3" y="4" width="2" height="1" fill="#606060"/><rect x="1" y="5" width="3" height="1" fill="#606060"/><rect x="0" y="6" width="3" height="1" fill="#606060"/></svg>
<div style="position:absolute;left:836px;top:294px;width:80px;height:20px;box-sizing:border-box;border:1px solid #767676;border-right:none;background:#fff;"></div>
<div class="t" style="left:842px;top:295px;height:18px;line-height:18px;font-size:11.5px;color:#575757;letter-spacing:-0.1px;">Absperrarmatur</div>
<div style="position:absolute;left:312px;top:324px;width:595px;height:242px;box-sizing:border-box;background:#fff;border-top:1px solid #A0A0A0;border-left:1px solid #A0A0A0;border-right:1px solid #fff;border-bottom:1px solid #fff;"></div>
<div style="position:absolute;left:313px;top:325px;width:593px;height:240px;box-sizing:border-box;border-top:1px solid #696969;border-left:1px solid #696969;border-right:1px solid #E3E3E3;border-bottom:1px solid #E3E3E3;"></div>
<div class="t" style="left:320px;top:330px;height:17px;line-height:17px;font-size:12px;color:#000;letter-spacing:-0.35px;">Name</div>
<div style="position:absolute;left:485px;top:329px;width:16px;height:17px;background:#F0F0F0;"></div>
<div style="position:absolute;left:501px;top:328px;width:1px;height:19px;background:#A0A0A0;"></div>
<div style="position:absolute;left:484px;top:346px;width:18px;height:1px;background:#A0A0A0;"></div>
<svg style="position:absolute;left:489px;top:336px;" width="8" height="4" viewBox="0 0 8 4"><path d="M0 0 H8 L4 4 Z" fill="#606060" style="shape-rendering:geometricPrecision"/></svg>
<div style="position:absolute;left:506px;top:326px;width:1px;height:24px;background:#E5E5E5;"></div>
<div class="t" style="left:513px;top:330px;height:17px;line-height:17px;font-size:12px;color:#000;letter-spacing:-0.35px;">L</div>
<div style="position:absolute;left:550px;top:329px;width:16px;height:17px;background:#F0F0F0;"></div>
<div style="position:absolute;left:566px;top:328px;width:1px;height:19px;background:#A0A0A0;"></div>
<div style="position:absolute;left:549px;top:346px;width:18px;height:1px;background:#A0A0A0;"></div>
<svg style="position:absolute;left:554px;top:336px;" width="8" height="4" viewBox="0 0 8 4"><path d="M0 0 H8 L4 4 Z" fill="#606060" style="shape-rendering:geometricPrecision"/></svg>
<div style="position:absolute;left:571px;top:326px;width:1px;height:24px;background:#E5E5E5;"></div>
<div class="t" style="left:578px;top:330px;height:17px;line-height:17px;font-size:12px;color:#000;letter-spacing:-0.35px;">H</div>
<div style="position:absolute;left:615px;top:329px;width:16px;height:17px;background:#F0F0F0;"></div>
<div style="position:absolute;left:631px;top:328px;width:1px;height:19px;background:#A0A0A0;"></div>
<div style="position:absolute;left:614px;top:346px;width:18px;height:1px;background:#A0A0A0;"></div>
<svg style="position:absolute;left:619px;top:336px;" width="8" height="4" viewBox="0 0 8 4"><path d="M0 0 H8 L4 4 Z" fill="#606060" style="shape-rendering:geometricPrecision"/></svg>
<div style="position:absolute;left:636px;top:326px;width:1px;height:24px;background:#E5E5E5;"></div>
<div class="t" style="left:643px;top:330px;height:17px;line-height:17px;font-size:12px;color:#000;letter-spacing:-0.35px;">C</div>
<div style="position:absolute;left:680px;top:329px;width:16px;height:17px;background:#F0F0F0;"></div>
<div style="position:absolute;left:696px;top:328px;width:1px;height:19px;background:#A0A0A0;"></div>
<div style="position:absolute;left:679px;top:346px;width:18px;height:1px;background:#A0A0A0;"></div>
<svg style="position:absolute;left:684px;top:336px;" width="8" height="4" viewBox="0 0 8 4"><path d="M0 0 H8 L4 4 Z" fill="#606060" style="shape-rendering:geometricPrecision"/></svg>
<div style="position:absolute;left:701px;top:326px;width:1px;height:24px;background:#E5E5E5;"></div>
<div class="t" style="left:708px;top:330px;height:17px;line-height:17px;font-size:12px;color:#000;letter-spacing:-0.35px;">PN</div>
<div style="position:absolute;left:752px;top:329px;width:16px;height:17px;background:#F0F0F0;"></div>
<div style="position:absolute;left:768px;top:328px;width:1px;height:19px;background:#A0A0A0;"></div>
<div style="position:absolute;left:751px;top:346px;width:18px;height:1px;background:#A0A0A0;"></div>
<svg style="position:absolute;left:756px;top:336px;" width="8" height="4" viewBox="0 0 8 4"><path d="M0 0 H8 L4 4 Z" fill="#606060" style="shape-rendering:geometricPrecision"/></svg>
<div style="position:absolute;left:773px;top:326px;width:1px;height:24px;background:#E5E5E5;"></div>
<div class="t" style="left:780px;top:330px;height:17px;line-height:17px;font-size:12px;color:#000;letter-spacing:-0.35px;">Hersteller</div>
<div style="position:absolute;left:844px;top:329px;width:16px;height:17px;background:#F0F0F0;"></div>
<div style="position:absolute;left:860px;top:328px;width:1px;height:19px;background:#A0A0A0;"></div>
<div style="position:absolute;left:843px;top:346px;width:18px;height:1px;background:#A0A0A0;"></div>
<svg style="position:absolute;left:848px;top:336px;" width="8" height="4" viewBox="0 0 8 4"><path d="M0 0 H8 L4 4 Z" fill="#606060" style="shape-rendering:geometricPrecision"/></svg>
<div style="position:absolute;left:865px;top:326px;width:1px;height:24px;background:#E5E5E5;"></div>
<div style="position:absolute;left:314px;top:350px;width:575px;height:214px;overflow:hidden;">
<div style="position:absolute;left:60px;top:18px;width:515px;height:18px;background:#F0F0F0;"></div>
<svg style="position:absolute;left:0;top:0" width="575" height="214"><g fill="#A0A0A0"><rect x="11" y="16" width="1" height="1"/><rect x="11" y="18" width="1" height="1"/><rect x="11" y="20" width="1" height="1"/><rect x="11" y="22" width="1" height="1"/><rect x="11" y="24" width="1" height="1"/><rect x="11" y="26" width="1" height="1"/><rect x="11" y="28" width="1" height="1"/><rect x="11" y="30" width="1" height="1"/><rect x="11" y="32" width="1" height="1"/><rect x="11" y="34" width="1" height="1"/><rect x="11" y="36" width="1" height="1"/><rect x="11" y="38" width="1" height="1"/><rect x="11" y="40" width="1" height="1"/><rect x="11" y="42" width="1" height="1"/><rect x="11" y="44" width="1" height="1"/><rect x="11" y="46" width="1" height="1"/><rect x="11" y="48" width="1" height="1"/><rect x="11" y="50" width="1" height="1"/><rect x="11" y="52" width="1" height="1"/><rect x="11" y="54" width="1" height="1"/><rect x="11" y="56" width="1" height="1"/><rect x="11" y="58" width="1" height="1"/><rect x="11" y="60" width="1" height="1"/><rect x="11" y="62" width="1" height="1"/><rect x="11" y="64" width="1" height="1"/><rect x="11" y="66" width="1" height="1"/><rect x="11" y="68" width="1" height="1"/><rect x="11" y="70" width="1" height="1"/><rect x="11" y="72" width="1" height="1"/><rect x="11" y="74" width="1" height="1"/><rect x="11" y="76" width="1" height="1"/><rect x="11" y="78" width="1" height="1"/><rect x="11" y="80" width="1" height="1"/><rect x="11" y="82" width="1" height="1"/><rect x="11" y="84" width="1" height="1"/><rect x="11" y="86" width="1" height="1"/><rect x="11" y="88" width="1" height="1"/><rect x="11" y="90" width="1" height="1"/><rect x="11" y="92" width="1" height="1"/><rect x="11" y="94" width="1" height="1"/><rect x="11" y="96" width="1" height="1"/><rect x="11" y="98" width="1" height="1"/><rect x="11" y="100" width="1" height="1"/><rect x="11" y="102" width="1" height="1"/><rect x="11" y="104" width="1" height="1"/><rect x="11" y="106" width="1" height="1"/><rect x="11" y="108" width="1" height="1"/><rect x="11" y="110" width="1" height="1"/><rect x="11" y="112" width="1" height="1"/><rect x="11" y="114" width="1" height="1"/><rect x="11" y="116" width="1" height="1"/><rect x="11" y="118" width="1" height="1"/><rect x="11" y="120" width="1" height="1"/><rect x="11" y="122" width="1" height="1"/><rect x="11" y="124" width="1" height="1"/><rect x="11" y="126" width="1" height="1"/><rect x="11" y="128" width="1" height="1"/><rect x="11" y="130" width="1" height="1"/><rect x="11" y="132" width="1" height="1"/><rect x="11" y="134" width="1" height="1"/><rect x="11" y="136" width="1" height="1"/><rect x="30" y="16" width="1" height="1"/><rect x="30" y="18" width="1" height="1"/><rect x="30" y="20" width="1" height="1"/><rect x="30" y="22" width="1" height="1"/><rect x="30" y="24" width="1" height="1"/><rect x="30" y="26" width="1" height="1"/><rect x="30" y="28" width="1" height="1"/><rect x="30" y="30" width="1" height="1"/><rect x="30" y="32" width="1" height="1"/><rect x="30" y="34" width="1" height="1"/><rect x="30" y="36" width="1" height="1"/><rect x="30" y="38" width="1" height="1"/><rect x="30" y="40" width="1" height="1"/><rect x="30" y="42" width="1" height="1"/><rect x="30" y="44" width="1" height="1"/><rect x="30" y="46" width="1" height="1"/><rect x="30" y="48" width="1" height="1"/><rect x="30" y="50" width="1" height="1"/><rect x="30" y="52" width="1" height="1"/><rect x="30" y="54" width="1" height="1"/><rect x="30" y="56" width="1" height="1"/><rect x="30" y="58" width="1" height="1"/><rect x="30" y="60" width="1" height="1"/><rect x="30" y="62" width="1" height="1"/><rect x="30" y="64" width="1" height="1"/><rect x="30" y="66" width="1" height="1"/><rect x="30" y="68" width="1" height="1"/><rect x="30" y="70" width="1" height="1"/><rect x="30" y="72" width="1" height="1"/><rect x="30" y="74" width="1" height="1"/><rect x="30" y="76" width="1" height="1"/><rect x="30" y="78" width="1" height="1"/><rect x="30" y="80" width="1" height="1"/><rect x="30" y="82" width="1" height="1"/><rect x="30" y="84" width="1" height="1"/><rect x="30" y="86" width="1" height="1"/><rect x="30" y="88" width="1" height="1"/><rect x="30" y="90" width="1" height="1"/><rect x="30" y="92" width="1" height="1"/><rect x="30" y="94" width="1" height="1"/><rect x="30" y="96" width="1" height="1"/><rect x="30" y="98" width="1" height="1"/><rect x="30" y="100" width="1" height="1"/><rect x="30" y="102" width="1" height="1"/><rect x="30" y="104" width="1" height="1"/><rect x="30" y="106" width="1" height="1"/><rect x="30" y="108" width="1" height="1"/><rect x="30" y="110" width="1" height="1"/><rect x="30" y="112" width="1" height="1"/><rect x="30" y="114" width="1" height="1"/><rect x="30" y="116" width="1" height="1"/><rect x="30" y="142" width="1" height="1"/><rect x="30" y="144" width="1" height="1"/><rect x="30" y="146" width="1" height="1"/><rect x="30" y="148" width="1" height="1"/><rect x="30" y="150" width="1" height="1"/><rect x="30" y="152" width="1" height="1"/><rect x="30" y="154" width="1" height="1"/><rect x="49" y="160" width="1" height="1"/><rect x="49" y="162" width="1" height="1"/><rect x="49" y="164" width="1" height="1"/><rect x="49" y="166" width="1" height="1"/><rect x="49" y="168" width="1" height="1"/><rect x="49" y="170" width="1" height="1"/><rect x="49" y="172" width="1" height="1"/><rect x="68" y="178" width="1" height="1"/><rect x="68" y="180" width="1" height="1"/><rect x="68" y="182" width="1" height="1"/><rect x="68" y="184" width="1" height="1"/><rect x="68" y="186" width="1" height="1"/><rect x="68" y="188" width="1" height="1"/><rect x="68" y="190" width="1" height="1"/><rect x="68" y="192" width="1" height="1"/><rect x="68" y="194" width="1" height="1"/><rect x="68" y="196" width="1" height="1"/><rect x="68" y="198" width="1" height="1"/><rect x="68" y="200" width="1" height="1"/><rect x="68" y="202" width="1" height="1"/><rect x="68" y="204" width="1" height="1"/><rect x="68" y="206" width="1" height="1"/><rect x="68" y="208" width="1" height="1"/><rect x="68" y="210" width="1" height="1"/><rect x="68" y="212" width="1" height="1"/><rect x="68" y="214" width="1" height="1"/><rect x="68" y="216" width="1" height="1"/><rect x="68" y="218" width="1" height="1"/><rect x="68" y="220" width="1" height="1"/><rect x="17" y="10" width="1" height="1"/><rect x="19" y="10" width="1" height="1"/><rect x="21" y="10" width="1" height="1"/><rect x="32" y="28" width="1" height="1"/><rect x="34" y="28" width="1" height="1"/><rect x="36" y="28" width="1" height="1"/><rect x="38" y="28" width="1" height="1"/><rect x="40" y="28" width="1" height="1"/><rect x="32" y="46" width="1" height="1"/><rect x="34" y="46" width="1" height="1"/><rect x="36" y="46" width="1" height="1"/><rect x="38" y="46" width="1" height="1"/><rect x="40" y="46" width="1" height="1"/><rect x="32" y="64" width="1" height="1"/><rect x="34" y="64" width="1" height="1"/><rect x="36" y="64" width="1" height="1"/><rect x="38" y="64" width="1" height="1"/><rect x="40" y="64" width="1" height="1"/><rect x="32" y="82" width="1" height="1"/><rect x="34" y="82" width="1" height="1"/><rect x="36" y="82" width="1" height="1"/><rect x="38" y="82" width="1" height="1"/><rect x="40" y="82" width="1" height="1"/><rect x="32" y="100" width="1" height="1"/><rect x="34" y="100" width="1" height="1"/><rect x="36" y="100" width="1" height="1"/><rect x="38" y="100" width="1" height="1"/><rect x="40" y="100" width="1" height="1"/><rect x="32" y="118" width="1" height="1"/><rect x="34" y="118" width="1" height="1"/><rect x="36" y="118" width="1" height="1"/><rect x="38" y="118" width="1" height="1"/><rect x="40" y="118" width="1" height="1"/><rect x="17" y="136" width="1" height="1"/><rect x="19" y="136" width="1" height="1"/><rect x="21" y="136" width="1" height="1"/><rect x="36" y="154" width="1" height="1"/><rect x="38" y="154" width="1" height="1"/><rect x="40" y="154" width="1" height="1"/><rect x="55" y="172" width="1" height="1"/><rect x="57" y="172" width="1" height="1"/><rect x="59" y="172" width="1" height="1"/><rect x="70" y="190" width="1" height="1"/><rect x="72" y="190" width="1" height="1"/><rect x="74" y="190" width="1" height="1"/><rect x="76" y="190" width="1" height="1"/><rect x="78" y="190" width="1" height="1"/><rect x="70" y="208" width="1" height="1"/><rect x="72" y="208" width="1" height="1"/><rect x="74" y="208" width="1" height="1"/><rect x="76" y="208" width="1" height="1"/><rect x="78" y="208" width="1" height="1"/></g></svg>
<svg style="position:absolute;left:7px;top:6px" width="9" height="9"><defs><linearGradient id="leg0" x1="0" y1="0" x2="1" y2="1"><stop offset="0" stop-color="#fff"/><stop offset="1" stop-color="#C8C8C8"/></linearGradient></defs><rect x="0.5" y="0.5" width="8" height="8" fill="url(#leg0)" stroke="#919191"/><rect x="2" y="4" width="5" height="1" fill="#2A3F9A"/></svg>
<svg style="position:absolute;left:21px;top:1px" width="16" height="16"><path d="M1.5 13.5 V2.5 H6.5 L7.5 4.5 H15.5 V13.5 Z" fill="url(#fg)" stroke="#8A7A55" stroke-width="1"/><rect x="2" y="3" width="4.5" height="1.5" fill="#FFF2A8"/><path d="M1.5 13.5 H15.5 V4.5" fill="none" stroke="#2A1E00" stroke-width="1" opacity="0.75"/></svg>
<div class="t" style="left:43px;top:0px;height:18px;line-height:18px;font-size:12px;color:#000;letter-spacing:-0.4px">PN 16</div>
<svg style="position:absolute;left:43px;top:20px" width="12" height="14"><rect x="0.5" y="0.5" width="9" height="12" fill="none" stroke="#800000" stroke-width="1.2"/></svg>
<div class="t" style="left:62px;top:18px;height:18px;line-height:18px;font-size:12px;color:#000;letter-spacing:-0.4px">DN 100 x 80</div>
<div class="t" style="left:190px;width:60px;text-align:right;top:18px;height:18px;line-height:18px;font-size:12px;color:#000;letter-spacing:-0.4px">190</div>
<div class="t" style="left:255px;width:60px;text-align:right;top:18px;height:18px;line-height:18px;font-size:12px;color:#000;letter-spacing:-0.4px">373</div>
<div class="t" style="left:320px;width:60px;text-align:right;top:18px;height:18px;line-height:18px;font-size:12px;color:#000;letter-spacing:-0.4px">220</div>
<div class="t" style="left:398px;top:18px;height:18px;line-height:18px;font-size:12px;color:#000;letter-spacing:-0.4px">PN16</div>
<svg style="position:absolute;left:43px;top:38px" width="12" height="14"><rect x="0.5" y="0.5" width="9" height="12" fill="none" stroke="#800000" stroke-width="1.2"/></svg>
<div class="t" style="left:62px;top:36px;height:18px;line-height:18px;font-size:12px;color:#000;letter-spacing:-0.4px">DN 125 x 100</div>
<div class="t" style="left:190px;width:60px;text-align:right;top:36px;height:18px;line-height:18px;font-size:12px;color:#000;letter-spacing:-0.4px">200</div>
<div class="t" style="left:255px;width:60px;text-align:right;top:36px;height:18px;line-height:18px;font-size:12px;color:#000;letter-spacing:-0.4px">450</div>
<div class="t" style="left:320px;width:60px;text-align:right;top:36px;height:18px;line-height:18px;font-size:12px;color:#000;letter-spacing:-0.4px">250</div>
<div class="t" style="left:398px;top:36px;height:18px;line-height:18px;font-size:12px;color:#000;letter-spacing:-0.4px">PN16</div>
<svg style="position:absolute;left:43px;top:56px" width="12" height="14"><rect x="0.5" y="0.5" width="9" height="12" fill="none" stroke="#800000" stroke-width="1.2"/></svg>
<div class="t" style="left:62px;top:54px;height:18px;line-height:18px;font-size:12px;color:#000;letter-spacing:-0.4px">DN 150 x 100</div>
<div class="t" style="left:190px;width:60px;text-align:right;top:54px;height:18px;line-height:18px;font-size:12px;color:#000;letter-spacing:-0.4px">210</div>
<div class="t" style="left:255px;width:60px;text-align:right;top:54px;height:18px;line-height:18px;font-size:12px;color:#000;letter-spacing:-0.4px">462</div>
<div class="t" style="left:320px;width:60px;text-align:right;top:54px;height:18px;line-height:18px;font-size:12px;color:#000;letter-spacing:-0.4px">285</div>
<div class="t" style="left:398px;top:54px;height:18px;line-height:18px;font-size:12px;color:#000;letter-spacing:-0.4px">PN16</div>
<svg style="position:absolute;left:43px;top:74px" width="12" height="14"><rect x="0.5" y="0.5" width="9" height="12" fill="none" stroke="#800000" stroke-width="1.2"/></svg>
<div class="t" style="left:62px;top:72px;height:18px;line-height:18px;font-size:12px;color:#000;letter-spacing:-0.4px">DN 200 x 150</div>
<div class="t" style="left:190px;width:60px;text-align:right;top:72px;height:18px;line-height:18px;font-size:12px;color:#000;letter-spacing:-0.4px">230</div>
<div class="t" style="left:255px;width:60px;text-align:right;top:72px;height:18px;line-height:18px;font-size:12px;color:#000;letter-spacing:-0.4px">563</div>
<div class="t" style="left:320px;width:60px;text-align:right;top:72px;height:18px;line-height:18px;font-size:12px;color:#000;letter-spacing:-0.4px">340</div>
<div class="t" style="left:398px;top:72px;height:18px;line-height:18px;font-size:12px;color:#000;letter-spacing:-0.4px">PN16</div>
<svg style="position:absolute;left:43px;top:92px" width="12" height="14"><rect x="0.5" y="0.5" width="9" height="12" fill="none" stroke="#800000" stroke-width="1.2"/></svg>
<div class="t" style="left:62px;top:90px;height:18px;line-height:18px;font-size:12px;color:#000;letter-spacing:-0.4px">DN 250 x 200</div>
<div class="t" style="left:190px;width:60px;text-align:right;top:90px;height:18px;line-height:18px;font-size:12px;color:#000;letter-spacing:-0.4px">250</div>
<div class="t" style="left:255px;width:60px;text-align:right;top:90px;height:18px;line-height:18px;font-size:12px;color:#000;letter-spacing:-0.4px">670</div>
<div class="t" style="left:320px;width:60px;text-align:right;top:90px;height:18px;line-height:18px;font-size:12px;color:#000;letter-spacing:-0.4px">405</div>
<div class="t" style="left:398px;top:90px;height:18px;line-height:18px;font-size:12px;color:#000;letter-spacing:-0.4px">PN16</div>
<svg style="position:absolute;left:43px;top:110px" width="12" height="14"><rect x="0.5" y="0.5" width="9" height="12" fill="none" stroke="#800000" stroke-width="1.2"/></svg>
<div class="t" style="left:62px;top:108px;height:18px;line-height:18px;font-size:12px;color:#000;letter-spacing:-0.4px">DN 300 x 250</div>
<div class="t" style="left:190px;width:60px;text-align:right;top:108px;height:18px;line-height:18px;font-size:12px;color:#000;letter-spacing:-0.4px">270</div>
<div class="t" style="left:255px;width:60px;text-align:right;top:108px;height:18px;line-height:18px;font-size:12px;color:#000;letter-spacing:-0.4px">753</div>
<div class="t" style="left:320px;width:60px;text-align:right;top:108px;height:18px;line-height:18px;font-size:12px;color:#000;letter-spacing:-0.4px">460</div>
<div class="t" style="left:398px;top:108px;height:18px;line-height:18px;font-size:12px;color:#000;letter-spacing:-0.4px">PN16</div>
<svg style="position:absolute;left:7px;top:132px" width="9" height="9"><defs><linearGradient id="leg7" x1="0" y1="0" x2="1" y2="1"><stop offset="0" stop-color="#fff"/><stop offset="1" stop-color="#C8C8C8"/></linearGradient></defs><rect x="0.5" y="0.5" width="8" height="8" fill="url(#leg7)" stroke="#919191"/><rect x="2" y="4" width="5" height="1" fill="#2A3F9A"/></svg>
<svg style="position:absolute;left:21px;top:127px" width="16" height="16"><path d="M1.5 13.5 V2.5 H6.5 L7.5 4.5 H15.5 V13.5 Z" fill="url(#fg)" stroke="#8A7A55" stroke-width="1"/><rect x="2" y="3" width="4.5" height="1.5" fill="#FFF2A8"/><path d="M1.5 13.5 H15.5 V4.5" fill="none" stroke="#2A1E00" stroke-width="1" opacity="0.75"/></svg>
<div class="t" style="left:43px;top:126px;height:18px;line-height:18px;font-size:12px;color:#000;letter-spacing:-0.4px">Hawle</div>
<svg style="position:absolute;left:26px;top:150px" width="9" height="9"><defs><linearGradient id="leg8" x1="0" y1="0" x2="1" y2="1"><stop offset="0" stop-color="#fff"/><stop offset="1" stop-color="#C8C8C8"/></linearGradient></defs><rect x="0.5" y="0.5" width="8" height="8" fill="url(#leg8)" stroke="#919191"/><rect x="2" y="4" width="5" height="1" fill="#2A3F9A"/></svg>
<svg style="position:absolute;left:40px;top:145px" width="16" height="16"><path d="M1.5 13.5 V2.5 H6.5 L7.5 4.5 H15.5 V13.5 Z" fill="url(#fg)" stroke="#8A7A55" stroke-width="1"/><rect x="2" y="3" width="4.5" height="1.5" fill="#FFF2A8"/><path d="M1.5 13.5 H15.5 V4.5" fill="none" stroke="#2A1E00" stroke-width="1" opacity="0.75"/></svg>
<div class="t" style="left:62px;top:144px;height:18px;line-height:18px;font-size:12px;color:#000;letter-spacing:-0.4px">PN 16</div>
<svg style="position:absolute;left:45px;top:168px" width="9" height="9"><defs><linearGradient id="leg9" x1="0" y1="0" x2="1" y2="1"><stop offset="0" stop-color="#fff"/><stop offset="1" stop-color="#C8C8C8"/></linearGradient></defs><rect x="0.5" y="0.5" width="8" height="8" fill="url(#leg9)" stroke="#919191"/><rect x="2" y="4" width="5" height="1" fill="#2A3F9A"/></svg>
<svg style="position:absolute;left:59px;top:163px" width="16" height="16"><path d="M1.5 13.5 V2.5 H6.5 L7.5 4.5 H15.5 V13.5 Z" fill="url(#fg)" stroke="#8A7A55" stroke-width="1"/><rect x="2" y="3" width="4.5" height="1.5" fill="#FFF2A8"/><path d="M1.5 13.5 H15.5 V4.5" fill="none" stroke="#2A1E00" stroke-width="1" opacity="0.75"/></svg>
<div class="t" style="left:81px;top:162px;height:18px;line-height:18px;font-size:12px;color:#000;letter-spacing:-0.4px">4150</div>
<svg style="position:absolute;left:81px;top:182px" width="12" height="14"><rect x="0.5" y="0.5" width="9" height="12" fill="none" stroke="#800000" stroke-width="1.2"/></svg>
<div class="t" style="left:100px;top:180px;height:18px;line-height:18px;font-size:12px;color:#000;letter-spacing:-0.4px">DN 100 x 65</div>
<div class="t" style="left:190px;width:60px;text-align:right;top:180px;height:18px;line-height:18px;font-size:12px;color:#000;letter-spacing:-0.4px">185</div>
<div class="t" style="left:255px;width:60px;text-align:right;top:180px;height:18px;line-height:18px;font-size:12px;color:#000;letter-spacing:-0.4px">328</div>
<div class="t" style="left:320px;width:60px;text-align:right;top:180px;height:18px;line-height:18px;font-size:12px;color:#000;letter-spacing:-0.4px">220</div>
<div class="t" style="left:398px;top:180px;height:18px;line-height:18px;font-size:12px;color:#000;letter-spacing:-0.4px">PN16</div>
<div class="t" style="left:470px;top:180px;height:18px;line-height:18px;font-size:12px;color:#000;letter-spacing:-0.4px">Hawle</div>
<svg style="position:absolute;left:81px;top:200px" width="12" height="14"><rect x="0.5" y="0.5" width="9" height="12" fill="none" stroke="#800000" stroke-width="1.2"/></svg>
<div class="t" style="left:100px;top:198px;height:18px;line-height:18px;font-size:12px;color:#000;letter-spacing:-0.4px">DN 100 x 80</div>
<div class="t" style="left:190px;width:60px;text-align:right;top:198px;height:18px;line-height:18px;font-size:12px;color:#000;letter-spacing:-0.4px">200</div>
<div class="t" style="left:255px;width:60px;text-align:right;top:198px;height:18px;line-height:18px;font-size:12px;color:#000;letter-spacing:-0.4px">336</div>
<div class="t" style="left:320px;width:60px;text-align:right;top:198px;height:18px;line-height:18px;font-size:12px;color:#000;letter-spacing:-0.4px">220</div>
<div class="t" style="left:398px;top:198px;height:18px;line-height:18px;font-size:12px;color:#000;letter-spacing:-0.4px">PN16</div>
<div class="t" style="left:470px;top:198px;height:18px;line-height:18px;font-size:12px;color:#000;letter-spacing:-0.4px">Hawle</div>
</div>
<div style="position:absolute;left:889px;top:350px;width:16px;height:214px;background:#F0F0F0;"></div>
<div style="position:absolute;left:889px;top:367px;width:15px;height:86px;background:#CDCDCD;"></div>
<svg style="position:absolute;left:893px;top:356px;" width="7" height="6" viewBox="0 0 7 6"><rect x="3" y="0" width="1" height="1" fill="#606060"/><rect x="2" y="1" width="3" height="1" fill="#606060"/><rect x="1" y="2" width="2" height="1" fill="#606060"/><rect x="4" y="2" width="2" height="1" fill="#606060"/><rect x="0" y="3" width="2" height="1" fill="#606060"/><rect x="5" y="3" width="2" height="1" fill="#606060"/><rect x="0" y="4" width="2" height="1" fill="#606060"/><rect x="5" y="4" width="2" height="1" fill="#606060"/><rect x="0" y="5" width="1" height="1" fill="#606060"/><rect x="6" y="5" width="1" height="1" fill="#606060"/></svg>
<svg style="position:absolute;left:893px;top:553px;" width="7" height="6" viewBox="0 0 7 6"><rect x="0" y="0" width="1" height="1" fill="#606060"/><rect x="6" y="0" width="1" height="1" fill="#606060"/><rect x="0" y="1" width="2" height="1" fill="#606060"/><rect x="5" y="1" width="2" height="1" fill="#606060"/><rect x="0" y="2" width="2" height="1" fill="#606060"/><rect x="5" y="2" width="2" height="1" fill="#606060"/><rect x="1" y="3" width="2" height="1" fill="#606060"/><rect x="4" y="3" width="2" height="1" fill="#606060"/><rect x="2" y="4" width="3" height="1" fill="#606060"/><rect x="3" y="5" width="1" height="1" fill="#606060"/></svg>
<svg style="position:absolute;left:12px;top:577px;" width="13" height="13" viewBox="0 0 13 13"><rect x="0.5" y="0.5" width="12" height="12" fill="#fff" stroke="#333" stroke-width="1"/></svg>
<div class="t" style="left:28px;top:575px;height:16px;line-height:16px;font-size:11px;color:#000;letter-spacing:-0.25px;">Sortieren</div>
<div style="position:absolute;left:10px;top:596px;width:284px;height:259px;background:#fff;"></div>
<div style="position:absolute;left:11px;top:597px;width:282px;height:257px;background:#000;"></div>
<svg style="position:absolute;left:0;top:0" width="916" height="873"><g fill="none" stroke="#FF0000" stroke-width="1"><rect x="126.5" y="726.5" width="7" height="79"/><rect x="187.5" y="730.5" width="7" height="71"/><polyline points="133.5,745.5 142.5,745.5"/><polyline points="133.5,786.5 142.5,786.5"/><polyline points="178.5,750.5 187.5,750.5"/><polyline points="178.5,781.5 187.5,781.5"/><polyline points="142.5,715.5 142.5,786.5 147.5,791.5 173.5,791.5 178.5,786.5 178.5,715.5"/><rect x="140.5" y="702.5" width="40" height="13"/><polyline points="140.5,709.5 180.5,709.5"/><rect x="146.5" y="658.5" width="28" height="44"/><polyline points="146.5,658.5 148.5,646.5 172.5,646.5 174.5,658.5"/><polyline points="157.5,643.5 157.5,646.5"/><polyline points="163.5,643.5 163.5,646.5"/></g><path d="M119 632.5 H202 Q204.5 632.5 204.5 634.5 V636.5 Q204.5 638.5 202 638.5 H119 Q116.5 638.5 116.5 636.5 V634.5 Q116.5 632.5 119 632.5 Z M128.5 638.5 Q146 642 157.5 643.5 M192.5 638.5 Q175 642 163.5 643.5" fill="none" stroke="#FF0000" style="shape-rendering:geometricPrecision"/><g fill="none" stroke="#8CB4E0" stroke-width="1" stroke-dasharray="8,2,2,2"><polyline points="127.5,766.5 193.5,766.5"/></g><g fill="none" stroke="#00FF00" stroke-width="1"><polyline points="117.5,627.5 204.5,627.5"/><polyline points="88.5,632.5 88.5,766.5"/><polyline points="103.5,726.5 103.5,805.5"/><polyline points="118.5,745.5 118.5,786.5"/><polyline points="210.5,750.5 210.5,782.5"/><polyline points="224.5,730.5 224.5,801.5"/><polyline points="126.5,833.5 195.5,833.5"/><polyline points="152.5,616.5 152.5,626.5"/><path d="M152.5 616.5 H155 Q158.5 616.5 158.5 621.5 Q158.5 626.5 155 626.5 H152.5"/><polyline points="161.5,626.5 161.5,616.5 165.5,616.5 167.5,618.5 167.5,620.5 165.5,621.5 161.5,621.5"/><polyline points="78.5,696.5 86.5,696.5"/><polyline points="78.5,702.5 86.5,702.5"/><polyline points="82.5,696.5 82.5,702.5"/><polyline points="93.5,763.5 94.5,763.5"/><polyline points="92.5,764.5 92.5,767.5 93.5,768.5"/><polyline points="94.5,769.5 100.5,769.5"/><polyline points="101.5,768.5 101.5,764.5 100.5,763.5"/><polyline points="107.5,769.5 107.5,764.5 108.5,763.5 115.5,763.5 116.5,764.5 116.5,769.5"/><polyline points="108.5,767.5 115.5,767.5"/><polyline points="199.5,761.5 208.5,761.5"/><polyline points="200.5,762.5 200.5,763.5"/><polyline points="200.5,766.5 208.5,766.5"/><polyline points="199.5,767.5 199.5,770.5 200.5,771.5 208.5,771.5"/><polyline points="208.5,766.5 208.5,771.5"/><polyline points="214.5,761.5 223.5,761.5"/><polyline points="223.5,760.5 223.5,763.5"/><polyline points="215.5,762.5 215.5,763.5"/><polyline points="215.5,766.5 214.5,767.5 214.5,770.5 215.5,771.5 222.5,771.5 223.5,770.5 223.5,767.5 222.5,766.5"/><polyline points="127.5,808.5 127.5,819.5"/><path d="M127.5 808.5 H132 Q134.5 808.5 134.5 811 Q134.5 813.5 132 813.5 H127.5 H132.5 Q135.5 813.5 135.5 816.5 Q135.5 819.5 132.5 819.5 H127.5"/><polyline points="125.5,820.5 128.5,817.5"/><polyline points="133.5,820.5 136.5,817.5"/><polyline points="185.5,808.5 185.5,819.5"/><path d="M185.5 808.5 H190 Q192.5 808.5 192.5 811 Q192.5 813.5 190 813.5 H185.5 H190.5 Q193.5 813.5 193.5 816.5 Q193.5 819.5 190.5 819.5 H185.5"/><polyline points="195.5,810.5 197.5,808.5 197.5,819.5"/><polyline points="184.5,820.5 187.5,817.5"/><polyline points="192.5,820.5 196.5,817.5"/><polyline points="157.5,823.5 157.5,831.5 164.5,831.5"/></g><rect x="116" y="626" width="3" height="2" fill="#00FF00"/><rect x="203" y="626" width="3" height="2" fill="#00FF00"/><rect x="87" y="631" width="3" height="2" fill="#00FF00"/><rect x="87" y="765" width="3" height="2" fill="#00FF00"/><rect x="102" y="725" width="3" height="2" fill="#00FF00"/><rect x="102" y="804" width="3" height="2" fill="#00FF00"/><rect x="117" y="744" width="3" height="2" fill="#00FF00"/><rect x="117" y="785" width="3" height="2" fill="#00FF00"/><rect x="209" y="749" width="3" height="2" fill="#00FF00"/><rect x="209" y="781" width="3" height="2" fill="#00FF00"/><rect x="223" y="729" width="3" height="2" fill="#00FF00"/><rect x="223" y="800" width="3" height="2" fill="#00FF00"/><rect x="125" y="832" width="3" height="2" fill="#00FF00"/><rect x="194" y="832" width="3" height="2" fill="#00FF00"/></svg>
<div class="t" style="left:11px;top:853px;height:16px;line-height:16px;font-size:11.5px;color:#000;width:283px;text-align:center;letter-spacing:-0.3px;">DN 100 x 80</div>
<div style="position:absolute;left:305px;top:581px;width:609px;height:240px;box-sizing:border-box;border:1px solid #DCDCDC;"></div>
<div style="position:absolute;left:306px;top:582px;width:607px;height:238px;box-sizing:border-box;border:1px solid #fff;border-right:none;border-bottom:none;"></div>
<div class="t" style="left:312px;top:574px;height:16px;line-height:16px;font-size:11.5px;color:#000;background:#F0F0F0;padding:0 3px 0 2px;letter-spacing:-0.38px;">Ansicht und Einfügepunkt</div>
<div class="t" style="left:316px;top:600px;height:16px;line-height:16px;font-size:11.5px;color:#000;letter-spacing:-0.3px;">Einfügepunkt</div>
<div style="position:absolute;left:439px;top:598px;width:73px;height:21px;box-sizing:border-box;background:#E1E1E1;border:1px solid #ADADAD;"></div>
<div class="t" style="left:443px;top:600px;height:16px;line-height:16px;font-size:11.5px;color:#000;letter-spacing:-0.3px;">Punkt 1</div>
<svg style="position:absolute;left:499px;top:606px;" width="9" height="6" viewBox="0 0 9 6"><path d="M0.5 0.8 L4.5 4.8 L8.5 0.8" stroke="#444" stroke-width="1.1" fill="none" style="shape-rendering:geometricPrecision"/></svg>
<svg style="position:absolute;left:317px;top:632px;" width="13" height="13" viewBox="0 0 13 13"><circle cx="6.5" cy="6.5" r="6" fill="#fff" stroke="#333" stroke-width="1" style="shape-rendering:geometricPrecision"/><circle cx="6.5" cy="6.5" r="3.3" fill="#333" style="shape-rendering:geometricPrecision"/></svg>
<div class="t" style="left:333px;top:630px;height:16px;line-height:16px;font-size:11.5px;color:#000;letter-spacing:-0.3px;">Ansicht 1</div>
<svg style="position:absolute;left:317px;top:657px;" width="13" height="13" viewBox="0 0 13 13"><circle cx="6.5" cy="6.5" r="6" fill="#fff" stroke="#333" stroke-width="1" style="shape-rendering:geometricPrecision"/></svg>
<div class="t" style="left:333px;top:655px;height:16px;line-height:16px;font-size:11.5px;color:#000;letter-spacing:-0.3px;">Ansicht 2</div>
<svg style="position:absolute;left:317px;top:682px;" width="13" height="13" viewBox="0 0 13 13"><circle cx="6.5" cy="6.5" r="6" fill="#fff" stroke="#333" stroke-width="1" style="shape-rendering:geometricPrecision"/></svg>
<div class="t" style="left:333px;top:680px;height:16px;line-height:16px;font-size:11.5px;color:#000;letter-spacing:-0.3px;">Ansicht 3</div>
<svg style="position:absolute;left:317px;top:708px;" width="13" height="13" viewBox="0 0 13 13"><circle cx="6.5" cy="6.5" r="6" fill="#fff" stroke="#333" stroke-width="1" style="shape-rendering:geometricPrecision"/></svg>
<div class="t" style="left:333px;top:706px;height:16px;line-height:16px;font-size:11.5px;color:#000;letter-spacing:-0.3px;">Schema</div>
<svg style="position:absolute;left:317px;top:733px;" width="13" height="13" viewBox="0 0 13 13"><circle cx="6.5" cy="6.5" r="6" fill="#fff" stroke="#333" stroke-width="1" style="shape-rendering:geometricPrecision"/></svg>
<div class="t" style="left:333px;top:731px;height:16px;line-height:16px;font-size:11.5px;color:#000;letter-spacing:-0.3px;">Ansicht 4</div>
<svg style="position:absolute;left:573px;top:602px;" width="13" height="13" viewBox="0 0 13 13"><rect x="0.5" y="0.5" width="12" height="12" fill="#fff" stroke="#333" stroke-width="1"/><path d="M2.5 6.8 L5 9.2 L10.5 3.5" stroke="#333" stroke-width="1.3" fill="none" style="shape-rendering:geometricPrecision"/></svg>
<div class="t" style="left:589px;top:601px;height:16px;line-height:16px;font-size:11.5px;color:#000;letter-spacing:-0.3px;">System</div>
<svg style="position:absolute;left:573px;top:634px;" width="13" height="13" viewBox="0 0 13 13"><rect x="0.5" y="0.5" width="12" height="12" fill="#fff" stroke="#333" stroke-width="1"/><path d="M2.5 6.8 L5 9.2 L10.5 3.5" stroke="#333" stroke-width="1.3" fill="none" style="shape-rendering:geometricPrecision"/></svg>
<div class="t" style="left:589px;top:633px;height:16px;line-height:16px;font-size:11.5px;color:#000;letter-spacing:-0.3px;">Anfangselement</div>
<svg style="position:absolute;left:573px;top:659px;" width="13" height="13" viewBox="0 0 13 13"><rect x="0.5" y="0.5" width="12" height="12" fill="#fff" stroke="#333" stroke-width="1"/><path d="M2.5 6.8 L5 9.2 L10.5 3.5" stroke="#333" stroke-width="1.3" fill="none" style="shape-rendering:geometricPrecision"/></svg>
<div class="t" style="left:589px;top:658px;height:16px;line-height:16px;font-size:11.5px;color:#000;letter-spacing:-0.3px;">Endelement</div>
<svg style="position:absolute;left:573px;top:682px;" width="13" height="13" viewBox="0 0 13 13"><rect x="0.5" y="0.5" width="12" height="12" fill="#fff" stroke="#333" stroke-width="1"/><path d="M2.5 6.8 L5 9.2 L10.5 3.5" stroke="#333" stroke-width="1.3" fill="none" style="shape-rendering:geometricPrecision"/></svg>
<div class="t" style="left:589px;top:681px;height:16px;line-height:16px;font-size:11.5px;color:#000;letter-spacing:-0.3px;">Übergang einfügen</div>
<div class="t" style="left:573px;top:703px;height:16px;line-height:16px;font-size:11.5px;color:#000;letter-spacing:-0.3px;">Artikel</div>
<div class="t" style="left:573px;top:728px;height:16px;line-height:16px;font-size:11.5px;color:#000;letter-spacing:-0.3px;">Reihe</div>
<div class="t" style="left:573px;top:754px;height:16px;line-height:16px;font-size:11.5px;color:#000;letter-spacing:-0.3px;">Hersteller</div>
<div class="t" style="left:573px;top:780px;height:16px;line-height:16px;font-size:11.5px;color:#000;letter-spacing:-0.3px;">Bestellnummer</div>
<div style="position:absolute;left:717px;top:598px;width:179px;height:21px;box-sizing:border-box;background:#fff;border-top:1px solid #A0A0A0;border-left:1px solid #A0A0A0;border-right:1px solid #fff;border-bottom:1px solid #fff;"></div>
<div style="position:absolute;left:718px;top:599px;width:177px;height:19px;box-sizing:border-box;border-top:1px solid #696969;border-left:1px solid #696969;border-right:1px solid #E3E3E3;border-bottom:1px solid #E3E3E3;"></div>
<div style="position:absolute;left:721px;top:602px;width:14px;height:14px;box-sizing:border-box;background:#FF0040;border:1px solid #000;"></div>
<div class="t" style="left:737px;top:601px;height:16px;line-height:16px;font-size:11.5px;color:#000;letter-spacing:-0.3px;">Vorlauf</div>
<div style="position:absolute;left:880px;top:601px;width:13px;height:14px;box-sizing:border-box;border-radius:2px;background:linear-gradient(135deg,#D8E4FA,#B4CEF8);"></div>
<svg style="position:absolute;left:882px;top:605px;" width="9" height="7" viewBox="0 0 9 7"><path d="M1 1.2 L4.5 4.8 L8 1.2" stroke="#3C4A6A" stroke-width="2" fill="none" style="shape-rendering:geometricPrecision"/></svg>
<div style="position:absolute;left:719px;top:627px;width:176px;height:21px;box-sizing:border-box;background:#E1E1E1;border:1px solid #ADADAD;"></div>
<div class="t" style="left:723px;top:630px;height:16px;line-height:16px;font-size:11.5px;color:#000;letter-spacing:-0.3px;">Flansch</div>
<svg style="position:absolute;left:881px;top:635px;" width="9" height="6" viewBox="0 0 9 6"><path d="M0.5 0.8 L4.5 4.8 L8.5 0.8" stroke="#444" stroke-width="1.1" fill="none" style="shape-rendering:geometricPrecision"/></svg>
<div style="position:absolute;left:719px;top:655px;width:176px;height:21px;box-sizing:border-box;background:#E1E1E1;border:1px solid #ADADAD;"></div>
<div class="t" style="left:723px;top:658px;height:16px;line-height:16px;font-size:11.5px;color:#000;letter-spacing:-0.3px;">Flansch</div>
<svg style="position:absolute;left:881px;top:663px;" width="9" height="6" viewBox="0 0 9 6"><path d="M0.5 0.8 L4.5 4.8 L8.5 0.8" stroke="#444" stroke-width="1.1" fill="none" style="shape-rendering:geometricPrecision"/></svg>
<div style="position:absolute;left:719px;top:701px;width:176px;height:22px;box-sizing:border-box;background:#fff;border:1px solid #7A7A7A;"></div>
<div class="t" style="left:724px;top:703px;height:16px;line-height:16px;font-size:11.5px;color:#000;letter-spacing:-0.3px;">DN 100 x 80</div>
<div style="position:absolute;left:719px;top:726px;width:176px;height:22px;box-sizing:border-box;background:#fff;border:1px solid #7A7A7A;"></div>
<div style="position:absolute;left:719px;top:752px;width:176px;height:22px;box-sizing:border-box;background:#fff;border:1px solid #7A7A7A;"></div>
<div style="position:absolute;left:719px;top:778px;width:176px;height:22px;box-sizing:border-box;background:#fff;border:1px solid #7A7A7A;"></div>
<svg style="position:absolute;left:731px;top:804px;" width="13" height="13" viewBox="0 0 13 13"><rect x="0.5" y="0.5" width="12" height="12" fill="#fff" stroke="#333" stroke-width="1"/></svg>
<div class="t" style="left:747px;top:803px;height:16px;line-height:16px;font-size:11.5px;color:#000;letter-spacing:-0.3px;">Befehl wiederholen</div>
<div class="t" style="left:329px;top:828px;height:16px;line-height:16px;font-size:11.5px;color:#000;letter-spacing:-0.4px;">Aktuelle Einheit: Millimeter</div>
<div style="position:absolute;left:554px;top:826px;width:140px;height:31px;box-sizing:border-box;background:#F0F0F0;border-top:1px solid #fff;border-left:1px solid #fff;border-right:1px solid #A0A0A0;border-bottom:1px solid #A0A0A0;"></div>
<svg style="position:absolute;left:560px;top:834px;" width="18" height="15" viewBox="0 0 18 15"><rect x="0.5" y="4.5" width="11" height="10" fill="#fff" stroke="#555"/><rect x="2" y="7" width="2" height="1" fill="#333"/><rect x="5" y="7" width="5" height="1" fill="#333"/><rect x="2" y="9" width="2" height="1" fill="#333"/><rect x="5" y="9" width="5" height="1" fill="#333"/><rect x="2" y="11" width="2" height="1" fill="#333"/><rect x="5" y="11" width="5" height="1" fill="#333"/><path d="M2 4.5 L6 1 L12 1 L12 4" stroke="#666" fill="#ddd"/><path d="M12 2 L17 0.5 V6 Z" fill="#3030A0"/></svg>
<div class="t" style="left:554px;top:834px;height:16px;line-height:16px;font-size:11.5px;color:#000;width:164px;text-align:center;letter-spacing:-0.3px;">Objektstil</div>
<div style="position:absolute;left:729px;top:825px;width:146px;height:33px;box-sizing:border-box;background:#F0F0F0;border:1px solid #000;"></div>
<div style="position:absolute;left:730px;top:826px;width:144px;height:31px;box-sizing:border-box;border-top:1px solid #fff;border-left:1px solid #fff;border-right:1px solid #A0A0A0;border-bottom:1px solid #A0A0A0;"></div>
<svg style="position:absolute;left:739px;top:833px;" width="18" height="21" viewBox="0 0 18 21"><path d="M1 12 L4 10 L7 14.5 L15 1.5 L17.5 3.5 L7.5 19.5 Z" fill="#008000" stroke="#000" stroke-width="1" stroke-linejoin="round" style="shape-rendering:geometricPrecision"/><path d="M15.2 2.5 L16.5 3.5" stroke="#aaa" stroke-width="1.2" style="shape-rendering:geometricPrecision"/></svg>
<div class="t" style="left:729px;top:833px;height:17px;line-height:17px;font-size:12px;color:#000;width:170px;text-align:center;letter-spacing:-0.2px;">OK</div>
<div style="position:absolute;left:877px;top:825px;width:31px;height:33px;box-sizing:border-box;background:#F0F0F0;border-top:1px solid #fff;border-left:1px solid #fff;border-right:1px solid #A0A0A0;border-bottom:1px solid #A0A0A0;"></div>
<div style="position:absolute;left:890px;top:834px;width:3px;height:3px;background:#000;"></div>
<div style="position:absolute;left:890px;top:840px;width:3px;height:3px;background:#000;"></div>
<div style="position:absolute;left:890px;top:846px;width:3px;height:3px;background:#000;"></div>
<div style="position:absolute;left:911px;top:861px;width:2px;height:2px;background:#B0B0B0;"></div>
<div style="position:absolute;left:908px;top:864px;width:2px;height:2px;background:#B0B0B0;"></div>
<div style="position:absolute;left:911px;top:864px;width:2px;height:2px;background:#B0B0B0;"></div>
<div style="position:absolute;left:905px;top:867px;width:2px;height:2px;background:#B0B0B0;"></div>
<div style="position:absolute;left:908px;top:867px;width:2px;height:2px;background:#B0B0B0;"></div>
<div style="position:absolute;left:911px;top:867px;width:2px;height:2px;background:#B0B0B0;"></div>
</body></html>
